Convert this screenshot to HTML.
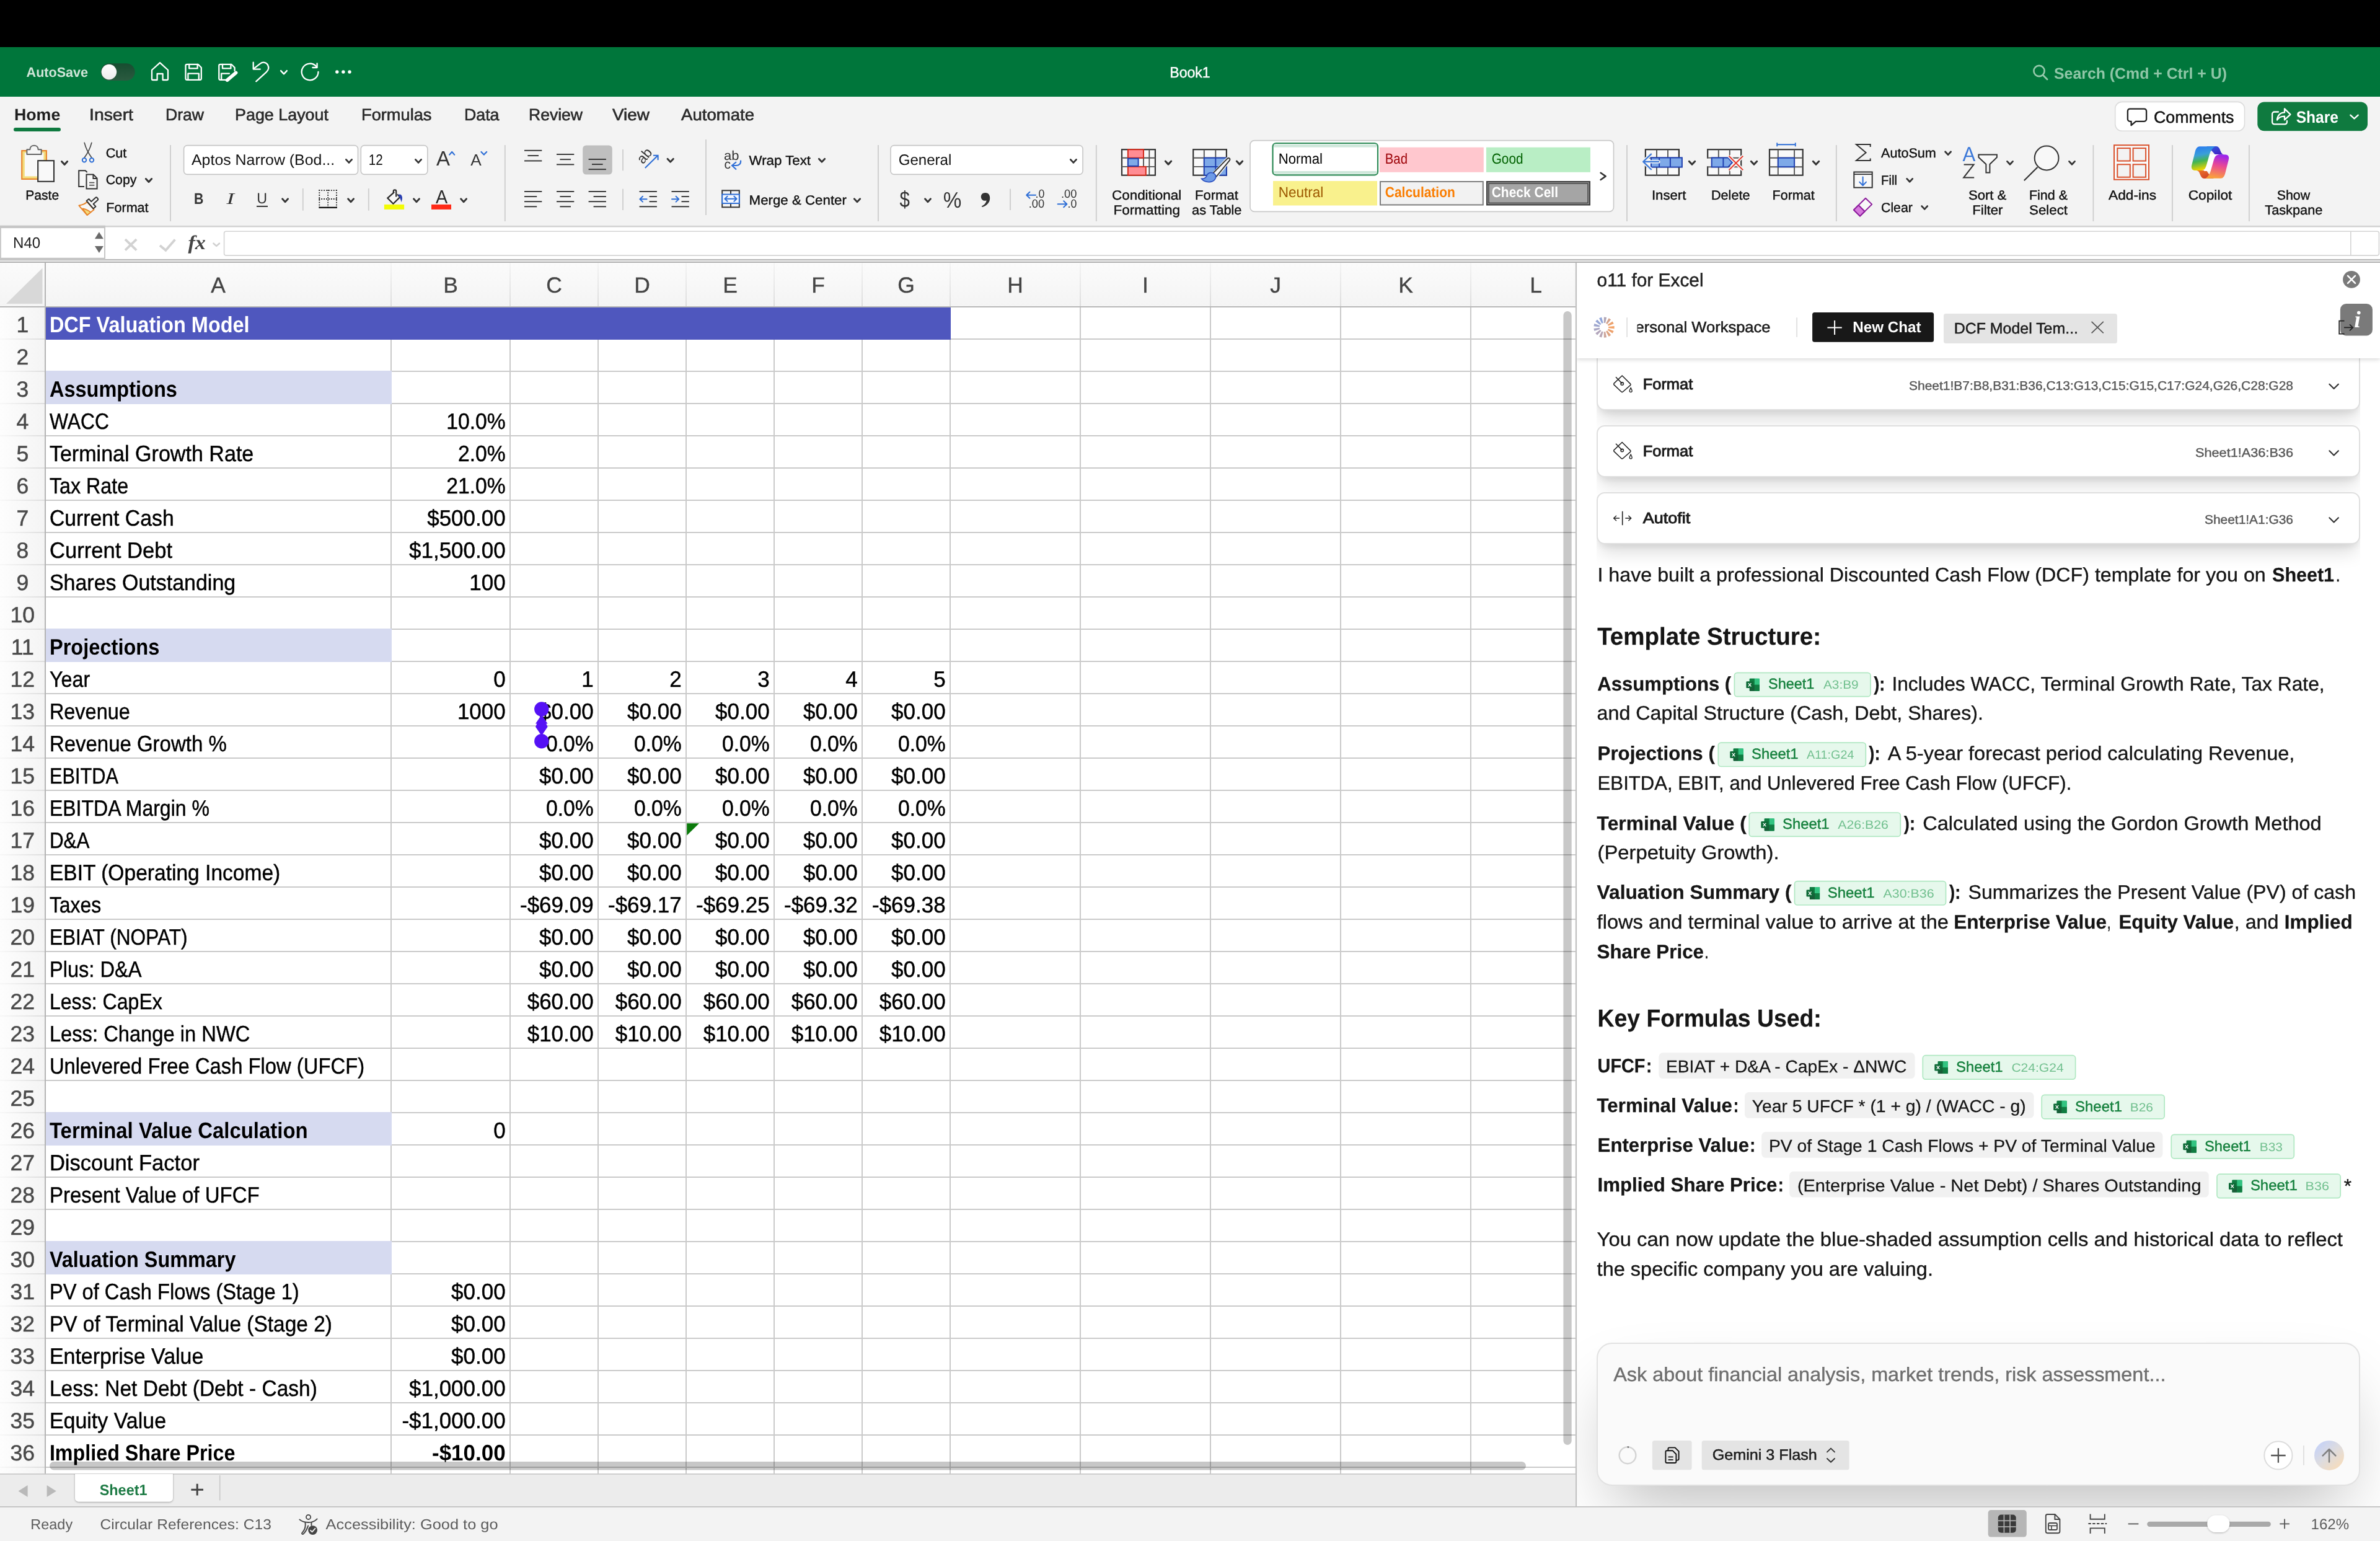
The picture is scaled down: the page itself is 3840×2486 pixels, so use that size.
<!DOCTYPE html>
<html lang="en"><head><meta charset="utf-8"><title>Book1 - Excel</title>
<style>
html,body{margin:0;padding:0;background:#fff;}
body{width:100vw;height:64.7396vw;position:relative;overflow:hidden;font-family:'Liberation Sans', sans-serif;}
svg{position:absolute;left:0;top:0;width:100vw;height:64.7396vw;will-change:transform;}
text{white-space:pre;}
</style></head><body>
<div style="position:absolute;left:66.25vw;top:11.0417vw;width:33.75vw;height:52.2656vw;overflow:hidden;background:#fff;"><div style="position:absolute;left:0.8333vw;top:4.0104vw;width:32.0833vw;height:40.625vw;overflow:hidden;"><div style="position:absolute;left:0;top:-0.9896vw;width:31.9792vw;height:3.0729vw;background:#fff;border:0.0521vw solid #dfdfdf;border-radius:0.3385vw;box-shadow:0 0.5208vw 0.7292vw -0.1562vw rgba(0,0,0,0.13), 0 0.2083vw 0.3125vw -0.1562vw rgba(0,0,0,0.09);"></div><div style="position:absolute;left:0;top:2.8125vw;width:31.9792vw;height:2.0833vw;background:#fff;border:0.0521vw solid #dfdfdf;border-radius:0.3385vw;box-shadow:0 0.5208vw 0.7292vw -0.1562vw rgba(0,0,0,0.13), 0 0.2083vw 0.3125vw -0.1562vw rgba(0,0,0,0.09);"></div><div style="position:absolute;left:0;top:5.625vw;width:31.9792vw;height:2.0833vw;background:#fff;border:0.0521vw solid #dfdfdf;border-radius:0.3385vw;box-shadow:0 0.5208vw 0.7292vw -0.1562vw rgba(0,0,0,0.13), 0 0.2083vw 0.3125vw -0.1562vw rgba(0,0,0,0.09);"></div></div><div style="position:absolute;left:0.8333vw;top:45.3646vw;width:31.9792vw;height:5.9115vw;background:#fafafa;border:0.0521vw solid #e2e2e2;border-radius:0.651vw;box-shadow:0 1.4323vw 2.8646vw -0.6771vw rgba(0,0,0,0.26);"></div><div style="position:absolute;left:0;top:0;width:33.75vw;height:4.0104vw;background:#fff;box-shadow:0 0.0521vw 0.1823vw rgba(0,0,0,0.16);"></div></div>
<svg viewBox="0 0 3840 2486" preserveAspectRatio="xMinYMin meet" text-rendering="geometricPrecision">
<rect x="0" y="0" width="3840" height="76" fill="#000" />
<rect x="0" y="76" width="3840" height="80" fill="#00763B" />
<rect x="0" y="156" width="3840" height="208" fill="#f3f3f3" />
<rect x="0" y="364" width="3840" height="60" fill="#fff" />
<rect x="0" y="364" width="3840" height="2.5" fill="#d2d2d2" />
<rect x="0" y="418" width="3840" height="1.6" fill="#ababab" />
<rect x="0" y="419.6" width="3840" height="2.9" fill="#dedede" />
<rect x="0" y="422.5" width="3840" height="1.5" fill="#a8a8a8" />
<text x="42.6" y="123.7" font-family="'Liberation Sans', sans-serif" font-size="22" fill="#cfe5d8" font-weight="700" textLength="99.5" lengthAdjust="spacingAndGlyphs" >AutoSave</text>
<defs><linearGradient id="tg" x1="0" y1="0" x2="0" y2="1"><stop offset="0" stop-color="#174d30"/><stop offset="1" stop-color="#2b5a40"/></linearGradient><linearGradient id="knob" x1="0" y1="0" x2="0" y2="1"><stop offset="0" stop-color="#ffffff"/><stop offset="1" stop-color="#ececec"/></linearGradient></defs>
<rect x="162.5" y="102.2" width="55.2" height="27.8" fill="url(#tg)" rx="13.9" />
<circle cx="175.9" cy="116.1" r="12.3" fill="url(#knob)" />
<path d="M245 113 L258 101.2 L271 113 V127.4 a1.6 1.6 0 0 1 -1.6 1.6 H262.6 V119 H253.6 V129 H246.6 a1.6 1.6 0 0 1 -1.6 -1.6 Z" fill="none" stroke="#fff" stroke-width="2.3" stroke-linejoin="round" stroke-linecap="round"/>
<path d="M301.5 103.8 H319.5 L324.8 109 V126.5 a2.4 2.4 0 0 1 -2.4 2.4 H301.9 a2.4 2.4 0 0 1 -2.4 -2.4 V105.8 a2 2 0 0 1 2 -2 Z" fill="none" stroke="#fff" stroke-width="2.3" stroke-linejoin="round" stroke-linecap="round"/>
<path d="M305.2 104 V110.4 H318.6 V104" fill="none" stroke="#fff" stroke-width="2.3" stroke-linejoin="round" stroke-linecap="round"/>
<path d="M303.4 128.8 V118.6 H320.8 V128.8" fill="none" stroke="#fff" stroke-width="2.3" stroke-linejoin="round" stroke-linecap="round"/>
<path d="M366 128.9 H355.7 a2.4 2.4 0 0 1 -2.4 -2.4 V105.8 a2 2 0 0 1 2 -2 H373.3 L378.6 109 V114" fill="none" stroke="#fff" stroke-width="2.3" stroke-linejoin="round" stroke-linecap="round"/>
<path d="M359 104 V110.4 H372.4 V104" fill="none" stroke="#fff" stroke-width="2.3" stroke-linejoin="round" stroke-linecap="round"/>
<path d="M357.2 128.8 V118.6 H370" fill="none" stroke="#fff" stroke-width="2.3" stroke-linejoin="round" stroke-linecap="round"/>
<path d="M366.5 129.3 L380.6 117.4" fill="none" stroke="#fff" stroke-width="5.6" stroke-linecap="round"/>
<path d="M408.7 100.6 V111.6 H419.8" fill="none" stroke="#fff" stroke-width="2.3" stroke-linejoin="round" stroke-linecap="round"/>
<path d="M409.6 110.6 L419.5 102.8 C424 99.4 429.6 100.2 432 104.6 C434.2 108.8 433 113.4 429.4 116.6 L413.2 131.3" fill="none" stroke="#fff" stroke-width="2.3" stroke-linejoin="round" stroke-linecap="round"/>
<polyline points="453.12,114.07000000000001 458,119.33 462.88,114.07000000000001" fill="none" stroke="#fff" stroke-width="2.4" stroke-linecap="round" stroke-linejoin="round"/>
<path d="M510.6 107.6 A13.4 13.4 0 1 0 513.5 116" fill="none" stroke="#fff" stroke-width="2.3" stroke-linejoin="round" stroke-linecap="round"/>
<path d="M511.6 102.4 V109 H504.4" fill="none" stroke="#fff" stroke-width="2.3" stroke-linejoin="round" stroke-linecap="round"/>
<circle cx="543.8" cy="116" r="2.7" fill="#fff" />
<circle cx="553.9" cy="116" r="2.7" fill="#fff" />
<circle cx="564" cy="116" r="2.7" fill="#fff" />
<text x="1887.3" y="124.7" font-family="'Liberation Sans', sans-serif" font-size="24.4" fill="#fff" textLength="65.4" lengthAdjust="spacingAndGlyphs" stroke="#fff" stroke-width="0.45">Book1</text>
<circle cx="3290" cy="114.5" r="8.6" fill="none" stroke="#97caad" stroke-width="2.6" />
<line x1="3296.5" y1="121.5" x2="3303" y2="128" stroke="#97caad" stroke-width="2.8" stroke-linecap="round"/>
<text x="3314" y="127" font-family="'Liberation Sans', sans-serif" font-size="25" fill="#8fc6a7" font-weight="700" textLength="279" lengthAdjust="spacingAndGlyphs" >Search (Cmd + Ctrl + U)</text>
<text x="22.9" y="194" font-family="'Liberation Sans', sans-serif" font-size="26.5" fill="#1f1f1f" font-weight="700" textLength="74.4" lengthAdjust="spacingAndGlyphs" >Home</text>
<text x="144" y="194" font-family="'Liberation Sans', sans-serif" font-size="26.5" fill="#2b2b2b" textLength="71" lengthAdjust="spacingAndGlyphs" stroke="#2b2b2b" stroke-width="0.65">Insert</text>
<text x="267" y="194" font-family="'Liberation Sans', sans-serif" font-size="26.5" fill="#2b2b2b" textLength="62" lengthAdjust="spacingAndGlyphs" stroke="#2b2b2b" stroke-width="0.65">Draw</text>
<text x="379" y="194" font-family="'Liberation Sans', sans-serif" font-size="26.5" fill="#2b2b2b" textLength="151" lengthAdjust="spacingAndGlyphs" stroke="#2b2b2b" stroke-width="0.65">Page Layout</text>
<text x="583" y="194" font-family="'Liberation Sans', sans-serif" font-size="26.5" fill="#2b2b2b" textLength="113.5" lengthAdjust="spacingAndGlyphs" stroke="#2b2b2b" stroke-width="0.65">Formulas</text>
<text x="749" y="194" font-family="'Liberation Sans', sans-serif" font-size="26.5" fill="#2b2b2b" textLength="56.5" lengthAdjust="spacingAndGlyphs" stroke="#2b2b2b" stroke-width="0.65">Data</text>
<text x="853" y="194" font-family="'Liberation Sans', sans-serif" font-size="26.5" fill="#2b2b2b" textLength="87" lengthAdjust="spacingAndGlyphs" stroke="#2b2b2b" stroke-width="0.65">Review</text>
<text x="988" y="194" font-family="'Liberation Sans', sans-serif" font-size="26.5" fill="#2b2b2b" textLength="60" lengthAdjust="spacingAndGlyphs" stroke="#2b2b2b" stroke-width="0.65">View</text>
<text x="1099" y="194" font-family="'Liberation Sans', sans-serif" font-size="26.5" fill="#2b2b2b" textLength="118" lengthAdjust="spacingAndGlyphs" stroke="#2b2b2b" stroke-width="0.65">Automate</text>
<rect x="22" y="206" width="76" height="6" fill="#0f7a40" rx="3" />
<rect x="3412.7" y="164.4" width="208.8" height="46.9" fill="#fff" rx="11" stroke="#dcdcdc" stroke-width="1.6" />
<path d="M3436.5 175.6 H3459.5 a3.6 3.6 0 0 1 3.6 3.6 V192.2 a3.6 3.6 0 0 1 -3.6 3.6 H3446 L3438.6 202.2 V195.8 H3436.5 a3.6 3.6 0 0 1 -3.6 -3.6 V179.2 a3.6 3.6 0 0 1 3.6 -3.6 Z" fill="none" stroke="#222" stroke-width="2.3" stroke-linejoin="round"/>
<text x="3475" y="198.4" font-family="'Liberation Sans', sans-serif" font-size="26.5" fill="#111" textLength="129.5" lengthAdjust="spacingAndGlyphs" stroke="#111" stroke-width="0.5">Comments</text>
<rect x="3642.3" y="164.4" width="177.7" height="46.9" fill="#0f7a3f" rx="11" />
<path d="M3676 180.5 H3669.5 a3.4 3.4 0 0 0 -3.4 3.4 V197 a3.4 3.4 0 0 0 3.4 3.4 H3686.5 a3.4 3.4 0 0 0 3.4 -3.4 V195" fill="none" stroke="#fff" stroke-width="2.3" stroke-linecap="round" stroke-linejoin="round"/>
<path d="M3674 193.5 C3674.6 186.2 3679 181.6 3686 181.4 V175.4 L3695.4 184.6 L3686 193.4 V187.6 C3680.6 187.4 3676.8 189.4 3674 193.5 Z" fill="none" stroke="#fff" stroke-width="2.3" stroke-linejoin="round"/>
<text x="3704.7" y="198.4" font-family="'Liberation Sans', sans-serif" font-size="26.5" fill="#fff" font-weight="700" textLength="68.3" lengthAdjust="spacingAndGlyphs" >Share</text>
<polyline points="3792.27,185.72 3798.5,191.28 3804.73,185.72" fill="none" stroke="#fff" stroke-width="2.4" stroke-linecap="round" stroke-linejoin="round"/>
<rect x="35.2" y="243.1" width="39.7" height="45.8" fill="#f3dc7c" stroke="#e8852b" stroke-width="2.1" />
<rect x="39.8" y="246.4" width="30.6" height="38" fill="#f9f9f9" />
<path d="M43.4 249 V241.2 H48.4 C48.4 232.6 61.6 232.6 61.6 241.2 H66.7 V249 Z" fill="#f6f6f6" stroke="#666" stroke-width="2" stroke-linejoin="round"/>
<rect x="61.2" y="259.2" width="25.8" height="33.6" fill="#f9f9f9" stroke="#333" stroke-width="2.1" />
<polyline points="99.57499999999999,260.475 104.1,265.525 108.625,260.475" fill="none" stroke="#333" stroke-width="3" stroke-linecap="round" stroke-linejoin="round"/>
<text x="41.3" y="321.8" font-family="'Liberation Sans', sans-serif" font-size="21.3" fill="#111" textLength="53.9" lengthAdjust="spacingAndGlyphs" stroke="#111" stroke-width="0.4">Paste</text>
<path d="M136.2 230.4 C138.2 238 142.8 247.6 148 254.6" fill="none" stroke="#444" stroke-width="1.7" stroke-linecap="round"/>
<path d="M147.8 230.4 C145.8 238 141.2 247.6 136 254.6" fill="none" stroke="#444" stroke-width="1.7" stroke-linecap="round"/>
<circle cx="136" cy="258.3" r="3.2" fill="none" stroke="#2f6fd6" stroke-width="2" />
<circle cx="148" cy="258.3" r="3.2" fill="none" stroke="#2f6fd6" stroke-width="2" />
<text x="170.7" y="254" font-family="'Liberation Sans', sans-serif" font-size="21.3" fill="#111" textLength="33.7" lengthAdjust="spacingAndGlyphs" stroke="#111" stroke-width="0.4">Cut</text>
<path d="M136 301 H127.2 V275.2 H137.8 L140.6 278" fill="#f8f8f8" stroke="#333" stroke-width="2" stroke-linejoin="miter"/>
<path d="M139.5 281.6 H150.6 L156.6 287.6 V304.4 H139.5 Z" fill="#f8f8f8" stroke="#333" stroke-width="2" />
<path d="M150.4 281.8 V288 H156.4" fill="none" stroke="#333" stroke-width="2" />
<line x1="144" y1="294.6" x2="152.4" y2="294.6" stroke="#555" stroke-width="1.8" />
<line x1="144" y1="298.8" x2="152.4" y2="298.8" stroke="#555" stroke-width="1.8" />
<text x="170.7" y="297.3" font-family="'Liberation Sans', sans-serif" font-size="21.3" fill="#111" textLength="49.8" lengthAdjust="spacingAndGlyphs" stroke="#111" stroke-width="0.4">Copy</text>
<polyline points="235.375,288.475 240,293.525 244.625,288.475" fill="none" stroke="#333" stroke-width="3" stroke-linecap="round" stroke-linejoin="round"/>
<path d="M127.4 331.6 C133 330.6 137.6 328.6 140.6 325.8 L151.6 338.2 L140.6 347 Z" fill="#f7f7f7" stroke="#e8852b" stroke-width="2" stroke-linejoin="round"/>
<path d="M133.4 336.4 C138.4 337.6 143.2 339.8 146.4 342.4 L140.6 347 Z" fill="#f3dc7c" stroke="#e8852b" stroke-width="1.6" stroke-linejoin="round"/>
<path d="M139.6 324 L143.4 321 L147.2 325.2 L154 319 a2 2 0 0 1 2.8 0.2 L157.6 320.2 a2 2 0 0 1 -0.2 2.8 L150.6 329 L154.4 333.2 L150.6 336.6 Z" fill="#f7f7f7" stroke="#333" stroke-width="2" stroke-linejoin="round"/>
<text x="171.3" y="341.5" font-family="'Liberation Sans', sans-serif" font-size="21.3" fill="#111" textLength="68.3" lengthAdjust="spacingAndGlyphs" stroke="#111" stroke-width="0.4">Format</text>
<rect x="274.1" y="234" width="1.8" height="123" fill="#cdcdcd" />
<rect x="296.6" y="234.6" width="280.9" height="46.8" fill="#fff" rx="5.5" stroke="#c6c6c6" stroke-width="1.6" />
<text x="309" y="265.9" font-family="'Liberation Sans', sans-serif" font-size="24.2" fill="#111" textLength="231.2" lengthAdjust="spacingAndGlyphs" >Aptos Narrow (Bod...</text>
<polyline points="558.39,257.39 563,262.40999999999997 567.61,257.39" fill="none" stroke="#333" stroke-width="2.8" stroke-linecap="round" stroke-linejoin="round"/>
<rect x="582.3" y="234.6" width="107.5" height="46.8" fill="#fff" rx="5.5" stroke="#c6c6c6" stroke-width="1.6" />
<text x="594.8" y="265.9" font-family="'Liberation Sans', sans-serif" font-size="24.2" fill="#111" textLength="23" lengthAdjust="spacingAndGlyphs" >12</text>
<polyline points="670.39,257.39 675,262.40999999999997 679.61,257.39" fill="none" stroke="#333" stroke-width="2.8" stroke-linecap="round" stroke-linejoin="round"/>
<text x="704" y="267" font-family="'Liberation Sans', sans-serif" font-size="33.5" fill="#333" textLength="22" lengthAdjust="spacingAndGlyphs" >A</text>
<path d="M725.2 249.6 L729.2 245 L733.2 249.6" fill="none" stroke="#2f6fd6" stroke-width="2.2" stroke-linejoin="round" stroke-linecap="round"/>
<text x="759.3" y="267" font-family="'Liberation Sans', sans-serif" font-size="26" fill="#333" textLength="17.5" lengthAdjust="spacingAndGlyphs" >A</text>
<path d="M776.4 245 L780.8 249.6 L785.2 245" fill="none" stroke="#2f6fd6" stroke-width="2.2" stroke-linejoin="round" stroke-linecap="round"/>
<text x="313" y="328.6" font-family="'Liberation Sans', sans-serif" font-size="25" fill="#333" font-weight="700" textLength="15.4" lengthAdjust="spacingAndGlyphs" >B</text>
<text x="365.6" y="328.6" font-family="'Liberation Serif', serif" font-size="26" fill="#333" font-style="italic" textLength="12.5" lengthAdjust="spacingAndGlyphs" >I</text>
<text x="414.3" y="327.6" font-family="'Liberation Sans', sans-serif" font-size="24" fill="#333" textLength="16.8" lengthAdjust="spacingAndGlyphs" >U</text>
<rect x="414" y="331.9" width="18" height="2" fill="#333" />
<polyline points="455.59000000000003,320.69 460.1,325.71 464.61,320.69" fill="none" stroke="#333" stroke-width="2.8" stroke-linecap="round" stroke-linejoin="round"/>
<rect x="487.90000000000003" y="304" width="1.8" height="35.69999999999999" fill="#cdcdcd" />
<g stroke="#222" stroke-width="1.8" stroke-dasharray="1.8 2.1"><line x1="514.4" y1="307.2" x2="543.9" y2="307.2"/><line x1="515.3" y1="306.3" x2="515.3" y2="334"/><line x1="543" y1="306.3" x2="543" y2="334"/><line x1="529.2" y1="306.3" x2="529.2" y2="334"/><line x1="514.4" y1="321" x2="543.9" y2="321"/></g>
<rect x="514.4" y="333.7" width="29.5" height="2.3" fill="#111" />
<polyline points="561.59,320.69 566.1,325.71 570.61,320.69" fill="none" stroke="#333" stroke-width="2.8" stroke-linecap="round" stroke-linejoin="round"/>
<rect x="593.9" y="304" width="1.8" height="35.69999999999999" fill="#cdcdcd" />
<path d="M636.2 309.9 L625.3 319.6 L634.4 328.7 L645.4 317.9 L641 313.4" fill="#f8f8f8" stroke="#2b2b2b" stroke-width="2.2" stroke-linejoin="miter"/>
<path d="M634.8 311 V308.6 a2.2 2.2 0 0 1 4.4 0 V317.4" fill="none" stroke="#2b2b2b" stroke-width="2.2" stroke-linecap="butt"/>
<path d="M642.4 314.4 C645.2 312.4 648.7 314.4 649 318.6 C649.2 321.6 648.3 324 647.5 326.3 C647 322.6 645.6 319.4 642.4 314.4 Z" fill="#2a3fb0" />
<rect x="619.9" y="329.9" width="32.2" height="8" fill="#f2fb05" />
<polyline points="667.49,320.69 672,325.71 676.51,320.69" fill="none" stroke="#333" stroke-width="2.8" stroke-linecap="round" stroke-linejoin="round"/>
<text x="702.9" y="327.8" font-family="'Liberation Sans', sans-serif" font-size="30.4" fill="#2b2b2b" textLength="19.2" lengthAdjust="spacingAndGlyphs" >A</text>
<rect x="696" y="329.9" width="32" height="8" fill="#ff2a17" />
<polyline points="743.59,320.69 748.1,325.71 752.61,320.69" fill="none" stroke="#333" stroke-width="2.8" stroke-linecap="round" stroke-linejoin="round"/>
<rect x="813.9" y="234" width="1.8" height="123" fill="#cdcdcd" />
<rect x="940.2" y="234.4" width="47.6" height="47.2" fill="#bfbfbf" rx="5.5" />
<rect x="846" y="241.85000000000002" width="28.3" height="1.9" fill="#333" />
<rect x="851.4" y="250.15" width="17.6" height="1.9" fill="#333" />
<rect x="846" y="258.55" width="28.3" height="1.9" fill="#333" />
<rect x="898" y="248.05" width="28.3" height="1.9" fill="#333" />
<rect x="903.4" y="256.25" width="17.6" height="1.9" fill="#333" />
<rect x="898" y="264.45" width="28.3" height="1.9" fill="#333" />
<rect x="949.6" y="256.05" width="28.3" height="1.9" fill="#333" />
<rect x="955.0" y="264.15000000000003" width="17.6" height="1.9" fill="#333" />
<rect x="949.6" y="272.25" width="28.3" height="1.9" fill="#333" />
<rect x="1004.1" y="241" width="1.8" height="34.30000000000001" fill="#cdcdcd" />
<text x="0" y="0" font-family="'Liberation Sans', sans-serif" font-size="22.4" fill="#333" transform="translate(1037.6,265.6) rotate(-50)">ab</text>
<path d="M1040.8 271 L1061.2 251 M1054 250.7 H1061.6 V258.2" fill="none" stroke="#2f6fd6" stroke-width="2.1" stroke-linecap="butt" stroke-linejoin="miter"/>
<polyline points="1076.99,256.19 1081.7,261.21 1086.41,256.19" fill="none" stroke="#333" stroke-width="2.8" stroke-linecap="round" stroke-linejoin="round"/>
<rect x="846" y="308.05" width="28.3" height="1.9" fill="#333" />
<rect x="846" y="316.15000000000003" width="20.2" height="1.9" fill="#333" />
<rect x="846" y="324.25" width="28.3" height="1.9" fill="#333" />
<rect x="846" y="332.35" width="20.2" height="1.9" fill="#333" />
<rect x="898" y="308.05" width="28.3" height="1.9" fill="#333" />
<rect x="903.4" y="316.15000000000003" width="17.6" height="1.9" fill="#333" />
<rect x="898" y="324.25" width="28.3" height="1.9" fill="#333" />
<rect x="903.4" y="332.35" width="17.6" height="1.9" fill="#333" />
<rect x="949.6" y="308.05" width="28.3" height="1.9" fill="#333" />
<rect x="957.6" y="316.15000000000003" width="20.3" height="1.9" fill="#333" />
<rect x="949.6" y="324.25" width="28.3" height="1.9" fill="#333" />
<rect x="957.6" y="332.35" width="20.3" height="1.9" fill="#333" />
<rect x="1004.1" y="304.7" width="1.8" height="34.30000000000001" fill="#cdcdcd" />
<rect x="1031.6" y="308.05" width="28.3" height="1.9" fill="#333" />
<rect x="1047.6" y="316.15000000000003" width="12.3" height="1.9" fill="#333" />
<rect x="1047.6" y="324.25" width="12.3" height="1.9" fill="#333" />
<rect x="1031.6" y="332.35" width="28.3" height="1.9" fill="#333" />
<path d="M1043.6 321.2 H1032.6 M1037 316.8 L1032.4 321.2 L1037 325.6" fill="none" stroke="#2f6fd6" stroke-width="2" stroke-linejoin="round" stroke-linecap="round"/>
<rect x="1083.5" y="308.05" width="28.3" height="1.9" fill="#333" />
<rect x="1099.5" y="316.15000000000003" width="12.3" height="1.9" fill="#333" />
<rect x="1099.5" y="324.25" width="12.3" height="1.9" fill="#333" />
<rect x="1083.5" y="332.35" width="28.3" height="1.9" fill="#333" />
<path d="M1084 321.2 H1095 M1090.6 316.8 L1095.2 321.2 L1090.6 325.6" fill="none" stroke="#2f6fd6" stroke-width="2" stroke-linejoin="round" stroke-linecap="round"/>
<rect x="1138.1" y="225" width="1.8" height="122" fill="#cdcdcd" />
<text x="1168" y="257.6" font-family="'Liberation Sans', sans-serif" font-size="21" fill="#333" textLength="24.5" lengthAdjust="spacingAndGlyphs" >ab</text>
<text x="1168.4" y="271.8" font-family="'Liberation Sans', sans-serif" font-size="21" fill="#333" >c</text>
<path d="M1195 258.6 C1195.8 264 1192.8 267 1187.4 267 H1181.6 M1188 261.2 L1181 267 L1188 273.4" fill="none" stroke="#2f6fd6" stroke-width="2.1" stroke-linecap="butt" stroke-linejoin="miter"/>
<text x="1208.6" y="266" font-family="'Liberation Sans', sans-serif" font-size="21.3" fill="#111" textLength="99.4" lengthAdjust="spacingAndGlyphs" stroke="#111" stroke-width="0.4">Wrap Text</text>
<polyline points="1321.29,256.19 1326,261.21 1330.71,256.19" fill="none" stroke="#333" stroke-width="2.8" stroke-linecap="round" stroke-linejoin="round"/>
<rect x="1165.2" y="307.3" width="27.6" height="27" fill="none" stroke="#333" stroke-width="2" />
<line x1="1179" y1="307.3" x2="1179" y2="313.6" stroke="#333" stroke-width="2" />
<line x1="1179" y1="328" x2="1179" y2="334.3" stroke="#333" stroke-width="2" />
<rect x="1165.2" y="313.6" width="27.6" height="14.4" fill="#f4f8ff" stroke="#2f6fd6" stroke-width="2" />
<path d="M1169.6 320.8 H1188.4 M1173.6 316.8 L1169.4 320.8 L1173.6 324.8 M1184.4 316.8 L1188.6 320.8 L1184.4 324.8" fill="none" stroke="#2f6fd6" stroke-width="2" stroke-linejoin="round" stroke-linecap="round"/>
<text x="1208.6" y="329.7" font-family="'Liberation Sans', sans-serif" font-size="21.3" fill="#111" textLength="157.3" lengthAdjust="spacingAndGlyphs" stroke="#111" stroke-width="0.4">Merge &amp; Center</text>
<polyline points="1378.29,320.69 1383,325.71 1387.71,320.69" fill="none" stroke="#333" stroke-width="2.8" stroke-linecap="round" stroke-linejoin="round"/>
<rect x="1416.1" y="234" width="1.8" height="123" fill="#cdcdcd" />
<rect x="1437" y="234.6" width="310" height="46.8" fill="#fff" rx="5.5" stroke="#c6c6c6" stroke-width="1.6" />
<text x="1449.8" y="265.9" font-family="'Liberation Sans', sans-serif" font-size="24.2" fill="#111" textLength="85.5" lengthAdjust="spacingAndGlyphs" >General</text>
<polyline points="1727.2900000000002,257.39 1731.9,262.40999999999997 1736.51,257.39" fill="none" stroke="#333" stroke-width="2.8" stroke-linecap="round" stroke-linejoin="round"/>
<text x="1451.6" y="334.2" font-family="'Liberation Sans', sans-serif" font-size="36.4" fill="#333" textLength="16.4" lengthAdjust="spacingAndGlyphs" >$</text>
<polyline points="1492.49,320.69 1497,325.71 1501.51,320.69" fill="none" stroke="#333" stroke-width="2.8" stroke-linecap="round" stroke-linejoin="round"/>
<text x="1521.8" y="335.4" font-family="'Liberation Sans', sans-serif" font-size="36" fill="#333" textLength="29.6" lengthAdjust="spacingAndGlyphs" >%</text>
<path d="M1589.6 311 C1594.6 311 1597.2 314.4 1597.2 319.4 C1597.2 326.4 1592.6 331.8 1584.6 334 L1583.8 332.4 C1588.6 330.4 1591.2 327 1591.6 323.2 C1591 323.6 1590.2 323.8 1589.2 323.8 C1585.4 323.8 1582.8 321 1582.8 317.4 C1582.8 313.8 1585.6 311 1589.6 311 Z" fill="#333" />
<rect x="1629.1" y="304.7" width="1.8" height="34.30000000000001" fill="#cdcdcd" />
<text x="1670.6" y="319" font-family="'Liberation Sans', sans-serif" font-size="19" fill="#333" textLength="14.8" lengthAdjust="spacingAndGlyphs" >.0</text>
<text x="1659.8" y="335.4" font-family="'Liberation Sans', sans-serif" font-size="19" fill="#333" textLength="25.4" lengthAdjust="spacingAndGlyphs" >.00</text>
<path d="M1671 314.8 H1656.6 M1661.4 309.8 L1656.2 314.8 L1661.4 319.8" fill="none" stroke="#2f6fd6" stroke-width="2" stroke-linejoin="round" stroke-linecap="round"/>
<text x="1712" y="319" font-family="'Liberation Sans', sans-serif" font-size="19" fill="#333" textLength="25.4" lengthAdjust="spacingAndGlyphs" >.00</text>
<text x="1722.6" y="335.4" font-family="'Liberation Sans', sans-serif" font-size="19" fill="#333" textLength="14.8" lengthAdjust="spacingAndGlyphs" >.0</text>
<path d="M1706.6 329.2 H1721 M1716.2 324.2 L1721.4 329.2 L1716.2 334.2" fill="none" stroke="#2f6fd6" stroke-width="2" stroke-linejoin="round" stroke-linecap="round"/>
<rect x="1767.8999999999999" y="234" width="1.8" height="123" fill="#cdcdcd" />
<rect x="1810" y="241.2" width="53.90000000000009" height="41.5" fill="#f9f9f9" stroke="#333" stroke-width="2.2" />
<line x1="1819.9" y1="241.2" x2="1819.9" y2="282.7" stroke="#555" stroke-width="1.9" />
<line x1="1845" y1="241.2" x2="1845" y2="282.7" stroke="#555" stroke-width="1.9" />
<line x1="1854.3" y1="241.2" x2="1854.3" y2="282.7" stroke="#555" stroke-width="1.9" />
<line x1="1810" y1="254.7" x2="1863.9" y2="254.7" stroke="#555" stroke-width="1.9" />
<line x1="1810" y1="268.9" x2="1863.9" y2="268.9" stroke="#555" stroke-width="1.9" />
<rect x="1819.9" y="241.2" width="25.1" height="13.5" fill="#ff8c93" stroke="#d22b1b" stroke-width="2" />
<rect x="1819.9" y="268.9" width="28.9" height="13.8" fill="#ff8c93" stroke="#d22b1b" stroke-width="2" />
<rect x="1819.9" y="255.7" width="16.7" height="12.2" fill="#7ea9e8" stroke="#2040b0" stroke-width="2" />
<polyline points="1880.275,260.07500000000005 1885,265.125 1889.725,260.07500000000005" fill="none" stroke="#333" stroke-width="3" stroke-linecap="round" stroke-linejoin="round"/>
<text x="1794" y="321.6" font-family="'Liberation Sans', sans-serif" font-size="21.3" fill="#111" textLength="112.2" lengthAdjust="spacingAndGlyphs" stroke="#111" stroke-width="0.4">Conditional</text>
<text x="1796.4" y="345.6" font-family="'Liberation Sans', sans-serif" font-size="21.3" fill="#111" textLength="107.6" lengthAdjust="spacingAndGlyphs" stroke="#111" stroke-width="0.4">Formatting</text>
<rect x="1925.2" y="241.2" width="53.700000000000045" height="41.5" fill="#f9f9f9" stroke="#333" stroke-width="2.2" />
<line x1="1942.8" y1="241.2" x2="1942.8" y2="282.7" stroke="#555" stroke-width="1.9" />
<line x1="1961.3" y1="241.2" x2="1961.3" y2="282.7" stroke="#555" stroke-width="1.9" />
<line x1="1925.2" y1="254.7" x2="1978.9" y2="254.7" stroke="#555" stroke-width="1.9" />
<line x1="1925.2" y1="268.9" x2="1978.9" y2="268.9" stroke="#555" stroke-width="1.9" />
<rect x="1942.8" y="254.7" width="36.1" height="28" fill="#7ea9e8" stroke="#2040b0" stroke-width="2" />
<line x1="1961.3" y1="254.7" x2="1961.3" y2="282.7" stroke="#2040b0" stroke-width="2" />
<line x1="1942.8" y1="268.9" x2="1978.9" y2="268.9" stroke="#2040b0" stroke-width="2" />
<path d="M1958 280.4 L1980 256.6 C1982.6 254 1985.2 255.6 1983.6 258.6 L1962.6 284.8 Z" fill="#f7f7f7" stroke="#f3f3f3" stroke-width="5" />
<path d="M1957 279.6 L1980 256.2 C1982.8 253.6 1985.6 255.8 1983.8 258.8 L1962.4 285 Z" fill="#f7f7f7" stroke="#333" stroke-width="1.9" stroke-linejoin="round"/>
<path d="M1938.6 288.4 C1945 288.6 1946.6 285 1948 281.6 C1950 277.6 1957 277.4 1960.2 281 C1963.4 285 1961 290.6 1956.4 292.6 C1950.4 295 1942.6 293.4 1938.6 288.4 Z" fill="#6f9be6" stroke="#2a4fc0" stroke-width="1.6" />
<polyline points="1995.275,260.07500000000005 2000,265.125 2004.725,260.07500000000005" fill="none" stroke="#333" stroke-width="3" stroke-linecap="round" stroke-linejoin="round"/>
<text x="1928" y="321.6" font-family="'Liberation Sans', sans-serif" font-size="21.3" fill="#111" textLength="69.9" lengthAdjust="spacingAndGlyphs" stroke="#111" stroke-width="0.4">Format</text>
<text x="1923.1" y="345.6" font-family="'Liberation Sans', sans-serif" font-size="21.3" fill="#111" textLength="80.3" lengthAdjust="spacingAndGlyphs" stroke="#111" stroke-width="0.4">as Table</text>
<rect x="2017" y="226.6" width="586.5" height="114.8" fill="#fff" rx="7" stroke="#c9c9c9" stroke-width="1.6" />
<rect x="2053.5" y="231" width="169.5" height="51.4" fill="#fff" rx="5.5" stroke="#2e8b57" stroke-width="2.2" />
<rect x="2055.2" y="232.6" width="166.1" height="5" fill="#cfe7db" />
<rect x="2055.2" y="276" width="166.1" height="4.6" fill="#cfe7db" />
<text x="2062.7" y="263.8" font-family="'Liberation Sans', sans-serif" font-size="23.5" fill="#000" textLength="71.3" lengthAdjust="spacingAndGlyphs" >Normal</text>
<rect x="2226" y="237.7" width="167.8" height="40.1" fill="#ffc7ce" />
<text x="2234.8" y="263.8" font-family="'Liberation Sans', sans-serif" font-size="23.5" fill="#9c0006" textLength="36.2" lengthAdjust="spacingAndGlyphs" >Bad</text>
<rect x="2398" y="237.7" width="168" height="40.1" fill="#b9eec5" />
<text x="2406.7" y="263.8" font-family="'Liberation Sans', sans-serif" font-size="23.5" fill="#006100" textLength="50.8" lengthAdjust="spacingAndGlyphs" >Good</text>
<rect x="2054" y="292" width="168" height="39.5" fill="#f9f18d" />
<text x="2062.7" y="317.6" font-family="'Liberation Sans', sans-serif" font-size="23.5" fill="#9c5700" textLength="72.6" lengthAdjust="spacingAndGlyphs" >Neutral</text>
<rect x="2227" y="293" width="165.8" height="37.5" fill="#f2f2f2" stroke="#7f7f7f" stroke-width="2" />
<text x="2234.8" y="317.6" font-family="'Liberation Sans', sans-serif" font-size="23.5" fill="#fa7d00" font-weight="700" textLength="113" lengthAdjust="spacingAndGlyphs" >Calculation</text>
<rect x="2398" y="292" width="168" height="39.5" fill="#3f3f3f" />
<rect x="2400.2" y="294.2" width="163.6" height="35.1" fill="#a5a5a5" />
<rect x="2402" y="296" width="160" height="31.5" fill="none" stroke="#3f3f3f" stroke-width="1.4" />
<text x="2406.7" y="317.6" font-family="'Liberation Sans', sans-serif" font-size="23.5" fill="#fff" font-weight="700" textLength="107.3" lengthAdjust="spacingAndGlyphs" >Check Cell</text>
<path d="M2582.6 278.8 L2590.6 284.4 L2582.6 290" fill="none" stroke="#333" stroke-width="2.6" stroke-linejoin="round" stroke-linecap="round"/>
<rect x="2624.1" y="234" width="1.8" height="123" fill="#cdcdcd" />
<rect x="2654.9" y="241.2" width="54.0" height="41.5" fill="#f9f9f9" stroke="#333" stroke-width="2.2" />
<line x1="2673" y1="241.2" x2="2673" y2="282.7" stroke="#555" stroke-width="1.9" />
<line x1="2691" y1="241.2" x2="2691" y2="282.7" stroke="#555" stroke-width="1.9" />
<line x1="2654.9" y1="254.7" x2="2708.9" y2="254.7" stroke="#555" stroke-width="1.9" />
<line x1="2654.9" y1="269.2" x2="2708.9" y2="269.2" stroke="#555" stroke-width="1.9" />
<rect x="2664" y="254.4" width="49.9" height="15.2" fill="#7ea9e8" stroke="#2040b0" stroke-width="2" />
<line x1="2677.1" y1="254.4" x2="2677.1" y2="269.6" stroke="#2040b0" stroke-width="2" />
<line x1="2694.9" y1="254.4" x2="2694.9" y2="269.6" stroke="#2040b0" stroke-width="2" />
<path d="M2676 260.9 H2651.4 M2664 248.6 L2651.2 260.9 L2664 273.2" fill="none" stroke="#f3f3f3" stroke-width="5.4" stroke-linejoin="round" stroke-linecap="round"/>
<path d="M2676 260.9 H2651.4 M2664 248.6 L2651.2 260.9 L2664 273.2" fill="none" stroke="#3b78d8" stroke-width="2.2" stroke-linejoin="round" stroke-linecap="round"/>
<polyline points="2725.275,260.27500000000003 2730,265.325 2734.725,260.27500000000003" fill="none" stroke="#333" stroke-width="3" stroke-linecap="round" stroke-linejoin="round"/>
<text x="2664.9" y="321.9" font-family="'Liberation Sans', sans-serif" font-size="21.3" fill="#111" textLength="55.5" lengthAdjust="spacingAndGlyphs" stroke="#111" stroke-width="0.4">Insert</text>
<rect x="2755.2" y="241.2" width="54.0" height="41.5" fill="#f9f9f9" stroke="#333" stroke-width="2.2" />
<line x1="2772.8" y1="241.2" x2="2772.8" y2="282.7" stroke="#555" stroke-width="1.9" />
<line x1="2790.8" y1="241.2" x2="2790.8" y2="282.7" stroke="#555" stroke-width="1.9" />
<line x1="2755.2" y1="254.7" x2="2809.2" y2="254.7" stroke="#555" stroke-width="1.9" />
<line x1="2755.2" y1="269.2" x2="2809.2" y2="269.2" stroke="#555" stroke-width="1.9" />
<rect x="2752" y="255.7" width="12" height="12.5" fill="#f3f3f3" />
<path d="M2761.7 254.4 H2788 L2795 262.2 L2788 269.6 H2761.7 Z" fill="#7ea9e8" stroke="#2040b0" stroke-width="2" />
<line x1="2780.4" y1="254.4" x2="2780.4" y2="269.6" stroke="#2040b0" stroke-width="2" />
<path d="M2789.5 251.6 L2812.3 274.4 M2812.3 251.6 L2789.5 274.4" fill="none" stroke="#f3f3f3" stroke-width="5.4" />
<path d="M2789.5 251.6 L2812.3 274.4 M2812.3 251.6 L2789.5 274.4" fill="none" stroke="#e8392c" stroke-width="2" />
<polyline points="2825.275,260.27500000000003 2830,265.325 2834.725,260.27500000000003" fill="none" stroke="#333" stroke-width="3" stroke-linecap="round" stroke-linejoin="round"/>
<text x="2761" y="321.9" font-family="'Liberation Sans', sans-serif" font-size="21.3" fill="#111" textLength="62.4" lengthAdjust="spacingAndGlyphs" stroke="#111" stroke-width="0.4">Delete</text>
<rect x="2855" y="241.2" width="53.69999999999982" height="41.5" fill="#f9f9f9" stroke="#333" stroke-width="2.2" />
<line x1="2868.8" y1="241.2" x2="2868.8" y2="282.7" stroke="#555" stroke-width="1.9" />
<line x1="2895.1" y1="241.2" x2="2895.1" y2="282.7" stroke="#555" stroke-width="1.9" />
<line x1="2855" y1="254.7" x2="2908.7" y2="254.7" stroke="#555" stroke-width="1.9" />
<line x1="2855" y1="269.2" x2="2908.7" y2="269.2" stroke="#555" stroke-width="1.9" />
<rect x="2868.8" y="254.7" width="26.3" height="14.5" fill="#7ea9e8" stroke="#2040b0" stroke-width="2" />
<path d="M2867.2 230.2 V236.2 M2896.8 230.2 V236.2 M2867.2 233.2 H2896.8" fill="none" stroke="#2f6fd6" stroke-width="1.9" />
<polyline points="2925.275,260.27500000000003 2930,265.325 2934.725,260.27500000000003" fill="none" stroke="#333" stroke-width="3" stroke-linecap="round" stroke-linejoin="round"/>
<text x="2859.5" y="321.9" font-family="'Liberation Sans', sans-serif" font-size="21.3" fill="#111" textLength="68.3" lengthAdjust="spacingAndGlyphs" stroke="#111" stroke-width="0.4">Format</text>
<rect x="2961.9" y="234" width="1.8" height="123" fill="#cdcdcd" />
<path d="M3017.7 237 V233 H2995 L3010.6 246.2 L2995 259 H3017.7 V255.4" fill="none" stroke="#333" stroke-width="2" />
<text x="3035.1" y="253.6" font-family="'Liberation Sans', sans-serif" font-size="21.3" fill="#111" textLength="88.6" lengthAdjust="spacingAndGlyphs" stroke="#111" stroke-width="0.4">AutoSum</text>
<polyline points="3138.5899999999997,244.79 3143.1,249.60999999999999 3147.61,244.79" fill="none" stroke="#333" stroke-width="2.8" stroke-linecap="round" stroke-linejoin="round"/>
<rect x="2991.3" y="277.5" width="29.4" height="25.1" fill="#f8f8f8" stroke="#333" stroke-width="2" />
<line x1="2991.3" y1="281.2" x2="3020.7" y2="281.2" stroke="#333" stroke-width="1.8" />
<path d="M3005.6 285.4 V298.8 M3000.2 293.6 L3005.6 299.2 L3011 293.6" fill="none" stroke="#2f6fd6" stroke-width="2" stroke-linejoin="round" stroke-linecap="round"/>
<text x="3035.1" y="297.5" font-family="'Liberation Sans', sans-serif" font-size="21.3" fill="#111" textLength="25.9" lengthAdjust="spacingAndGlyphs" stroke="#111" stroke-width="0.4">Fill</text>
<polyline points="3076.6899999999996,288.39 3081.2,293.21000000000004 3085.71,288.39" fill="none" stroke="#333" stroke-width="2.8" stroke-linecap="round" stroke-linejoin="round"/>
<path d="M3010 319.8 L3020.2 329.6 L3001 348.6 L2990.9 338.6 Z" fill="#f8f8f8" stroke="#8b1a9b" stroke-width="2" stroke-linejoin="round"/>
<path d="M2998.6 331 L3008.6 341 L3001 348.6 L2990.9 338.6 Z" fill="#d679dc" stroke="#8b1a9b" stroke-width="2" stroke-linejoin="round"/>
<text x="3035.1" y="341.5" font-family="'Liberation Sans', sans-serif" font-size="21.3" fill="#111" textLength="50.7" lengthAdjust="spacingAndGlyphs" stroke="#111" stroke-width="0.4">Clear</text>
<polyline points="3100.6899999999996,332.59 3105.2,337.41 3109.71,332.59" fill="none" stroke="#333" stroke-width="2.8" stroke-linecap="round" stroke-linejoin="round"/>
<text x="3166.6" y="260" font-family="'Liberation Sans', sans-serif" font-size="33" fill="#3b78d8" textLength="20.8" lengthAdjust="spacingAndGlyphs" >A</text>
<path d="M3168.6 265.4 H3184.6 L3168.2 286.6 H3185.2" fill="none" stroke="#333" stroke-width="2" stroke-linejoin="miter"/>
<path d="M3192.4 249.4 H3221.9 V253.8 L3210.4 265 V278.4 H3204.4 V265 L3192.4 253.8 Z" fill="#f8f8f8" stroke="#333" stroke-width="2" stroke-linejoin="miter"/>
<polyline points="3238.49,260.39 3243,265.21000000000004 3247.51,260.39" fill="none" stroke="#333" stroke-width="2.8" stroke-linecap="round" stroke-linejoin="round"/>
<text x="3175.9" y="322" font-family="'Liberation Sans', sans-serif" font-size="21.3" fill="#111" textLength="61.5" lengthAdjust="spacingAndGlyphs" stroke="#111" stroke-width="0.4">Sort &amp;</text>
<text x="3182.2" y="345.8" font-family="'Liberation Sans', sans-serif" font-size="21.3" fill="#111" textLength="49.3" lengthAdjust="spacingAndGlyphs" stroke="#111" stroke-width="0.4">Filter</text>
<circle cx="3302.1" cy="255" r="19.4" fill="#f8f8f8" stroke="#333" stroke-width="2" />
<line x1="3287.4" y1="269.8" x2="3265.8" y2="291.2" stroke="#333" stroke-width="2.2" />
<polyline points="3338.49,260.39 3343,265.21000000000004 3347.51,260.39" fill="none" stroke="#333" stroke-width="2.8" stroke-linecap="round" stroke-linejoin="round"/>
<text x="3274" y="322" font-family="'Liberation Sans', sans-serif" font-size="21.3" fill="#111" textLength="62" lengthAdjust="spacingAndGlyphs" stroke="#111" stroke-width="0.4">Find &amp;</text>
<text x="3274" y="345.8" font-family="'Liberation Sans', sans-serif" font-size="21.3" fill="#111" textLength="62" lengthAdjust="spacingAndGlyphs" stroke="#111" stroke-width="0.4">Select</text>
<rect x="3376.5" y="234" width="1.8" height="123" fill="#cdcdcd" />
<rect x="3411" y="234.2" width="56" height="55.5" fill="#f8f9f9" stroke="#d9512c" stroke-width="2" />
<rect x="3416.3" y="239.1" width="20.5" height="20.5" fill="#f3f3f3" stroke="#d9512c" stroke-width="2" />
<rect x="3416.3" y="265.3" width="20.5" height="20.5" fill="#f3f3f3" stroke="#d9512c" stroke-width="2" />
<rect x="3441.6" y="239.1" width="20.5" height="20.5" fill="#f3f3f3" stroke="#d9512c" stroke-width="2" />
<rect x="3441.6" y="265.3" width="20.5" height="20.5" fill="#f3f3f3" stroke="#d9512c" stroke-width="2" />
<text x="3402" y="322" font-family="'Liberation Sans', sans-serif" font-size="21.3" fill="#111" textLength="77" lengthAdjust="spacingAndGlyphs" stroke="#111" stroke-width="0.4">Add-ins</text>
<rect x="3504.0" y="234" width="1.8" height="123" fill="#cdcdcd" />
<defs><linearGradient id="cpl" x1="0.3" y1="0" x2="0.5" y2="1"><stop offset="0" stop-color="#2a7cf0"/><stop offset="0.35" stop-color="#3a9fd8"/><stop offset="0.6" stop-color="#43b552"/><stop offset="0.95" stop-color="#ecd400"/></linearGradient><linearGradient id="cpr" x1="0.6" y1="0" x2="0.4" y2="1"><stop offset="0" stop-color="#9b22ee"/><stop offset="0.45" stop-color="#ea4a93"/><stop offset="1" stop-color="#fba438"/></linearGradient><linearGradient id="cpt" x1="0" y1="0" x2="1" y2="1"><stop offset="0" stop-color="#2a64e0"/><stop offset="1" stop-color="#4a14c0"/></linearGradient><linearGradient id="cpb" x1="0" y1="0" x2="1" y2="1"><stop offset="0" stop-color="#f07a2a"/><stop offset="1" stop-color="#c8362a"/></linearGradient></defs>
<path d="M3560 236 H3575.6 C3581 236 3581.6 242 3584 246.6 C3585.4 249.2 3587.6 249.4 3590 249.4 L3574 249.6 C3568.6 243 3564 239 3560 236 Z" fill="url(#cpt)" />
<path d="M3572 288 H3556.6 C3551 288 3550.4 282 3548 277.6 C3546.8 275.2 3544.4 275 3542 275 L3560 275 C3563.6 281 3567.6 285 3572 288 Z" fill="url(#cpb)" />
<path d="M3564 249 H3580 L3570 276 H3556 Z" fill="#fff" />
<path d="M3549 236.2 H3574 C3569.6 238.6 3566.4 243.6 3564.8 249.6 L3560 266.4 C3558.4 272 3556 275 3551.6 275 H3541.6 C3536.8 275 3535 271.2 3536.2 266.6 L3541.6 245 C3542.8 240 3545 236.2 3549 236.2 Z" fill="url(#cpl)" />
<path d="M3583 287.8 H3558 C3562.4 285.4 3565.6 280.4 3567.2 274.4 L3572 257.6 C3573.6 252 3576 249.4 3580.4 249.4 H3590.4 C3595.2 249.4 3597 252.8 3595.8 257.4 L3590.4 279 C3589.2 284 3587 287.8 3583 287.8 Z" fill="url(#cpr)" />
<text x="3530.7" y="322" font-family="'Liberation Sans', sans-serif" font-size="21.3" fill="#111" textLength="70.7" lengthAdjust="spacingAndGlyphs" stroke="#111" stroke-width="0.4">Copilot</text>
<rect x="3628.0" y="234" width="1.8" height="123" fill="#cdcdcd" />
<text x="3673.7" y="322" font-family="'Liberation Sans', sans-serif" font-size="21.3" fill="#111" textLength="53.4" lengthAdjust="spacingAndGlyphs" stroke="#111" stroke-width="0.4">Show</text>
<text x="3654.3" y="345.8" font-family="'Liberation Sans', sans-serif" font-size="21.3" fill="#111" textLength="93" lengthAdjust="spacingAndGlyphs" stroke="#111" stroke-width="0.4">Taskpane</text>
<rect x="0" y="363.7" width="170" height="55" fill="#c6c6c6" />
<rect x="1.8" y="368.1" width="166.2" height="47.7" fill="#fff" />
<text x="21" y="399.5" font-family="'Liberation Sans', sans-serif" font-size="24.6" fill="#222" textLength="44.2" lengthAdjust="spacingAndGlyphs" >N40</text>
<path d="M152.9 385.3 L159.9 374.3 L166.9 385.3 Z" fill="#6a6a6a" />
<path d="M152.9 397 L159.9 407.9 L166.9 397 Z" fill="#6a6a6a" />
<path d="M202 386.2 L220.2 403.6 M220.2 386.2 L202 403.6" fill="none" stroke="#d2d2d2" stroke-width="3.8" />
<path d="M258 396 L267.4 403.8 L282.4 386.4" fill="none" stroke="#d2d2d2" stroke-width="3.8" />
<text x="303.4" y="401.6" font-family="'Liberation Serif', serif" font-size="32" fill="#444" font-weight="700" font-style="italic" textLength="28.6" lengthAdjust="spacingAndGlyphs" >fx</text>
<polyline points="344.505,392.705 349.2,396.89500000000004 353.895,392.705" fill="none" stroke="#d0d0d0" stroke-width="2.6" stroke-linecap="round" stroke-linejoin="round"/>
<rect x="361.6" y="373.2" width="3476.8" height="38.9" fill="#fff" rx="3" stroke="#d4d4d4" stroke-width="1.6" />
<line x1="3792.8" y1="373.2" x2="3792.8" y2="412.1" stroke="#d4d4d4" stroke-width="1.6" />
<defs><linearGradient id="hdr" x1="0" y1="0" x2="0" y2="1"><stop offset="0" stop-color="#fbfbfb"/><stop offset="1" stop-color="#f4f4f4"/></linearGradient><linearGradient id="rhdr" x1="0" y1="0" x2="1" y2="0"><stop offset="0" stop-color="#fdfdfd"/><stop offset="1" stop-color="#f4f4f4"/></linearGradient><linearGradient id="rline" x1="0" y1="0" x2="1" y2="0"><stop offset="0" stop-color="#f8f8f8"/><stop offset="1" stop-color="#dddddd"/></linearGradient><linearGradient id="hsep" x1="0" y1="0" x2="0" y2="1"><stop offset="0" stop-color="#f4f4f4"/><stop offset="1" stop-color="#dcdcdc"/></linearGradient><clipPath id="gridclip"><rect x="0" y="424" width="2542" height="1954"/></clipPath></defs>
<g clip-path="url(#gridclip)">
<rect x="0" y="424" width="2542" height="1954" fill="#fff" />
<rect x="0" y="424" width="2542" height="71" fill="url(#hdr)" />
<rect x="0" y="495" width="73" height="1883" fill="url(#rhdr)" />
<rect x="630" y="424" width="2" height="71" fill="url(#hsep)" />
<rect x="630" y="547" width="2" height="1831" fill="#cacaca" />
<rect x="822" y="424" width="2" height="71" fill="url(#hsep)" />
<rect x="822" y="547" width="2" height="1831" fill="#cacaca" />
<rect x="964" y="424" width="2" height="71" fill="url(#hsep)" />
<rect x="964" y="547" width="2" height="1831" fill="#cacaca" />
<rect x="1106" y="424" width="2" height="71" fill="url(#hsep)" />
<rect x="1106" y="547" width="2" height="1831" fill="#cacaca" />
<rect x="1248" y="424" width="2" height="71" fill="url(#hsep)" />
<rect x="1248" y="547" width="2" height="1831" fill="#cacaca" />
<rect x="1390" y="424" width="2" height="71" fill="url(#hsep)" />
<rect x="1390" y="547" width="2" height="1831" fill="#cacaca" />
<rect x="1532" y="424" width="2" height="71" fill="url(#hsep)" />
<rect x="1532" y="495" width="2" height="1883" fill="#cacaca" />
<rect x="1742" y="424" width="2" height="71" fill="url(#hsep)" />
<rect x="1742" y="495" width="2" height="1883" fill="#cacaca" />
<rect x="1952" y="424" width="2" height="71" fill="url(#hsep)" />
<rect x="1952" y="495" width="2" height="1883" fill="#cacaca" />
<rect x="2162" y="424" width="2" height="71" fill="url(#hsep)" />
<rect x="2162" y="495" width="2" height="1883" fill="#cacaca" />
<rect x="2372" y="424" width="2" height="71" fill="url(#hsep)" />
<rect x="2372" y="495" width="2" height="1883" fill="#cacaca" />
<rect x="2582" y="424" width="2" height="71" fill="url(#hsep)" />
<rect x="73" y="546" width="2469" height="2" fill="#cacaca" />
<rect x="0" y="546" width="73" height="2" fill="url(#rline)" />
<rect x="73" y="598" width="2469" height="2" fill="#cacaca" />
<rect x="0" y="598" width="73" height="2" fill="url(#rline)" />
<rect x="73" y="650" width="2469" height="2" fill="#cacaca" />
<rect x="0" y="650" width="73" height="2" fill="url(#rline)" />
<rect x="73" y="702" width="2469" height="2" fill="#cacaca" />
<rect x="0" y="702" width="73" height="2" fill="url(#rline)" />
<rect x="73" y="754" width="2469" height="2" fill="#cacaca" />
<rect x="0" y="754" width="73" height="2" fill="url(#rline)" />
<rect x="73" y="806" width="2469" height="2" fill="#cacaca" />
<rect x="0" y="806" width="73" height="2" fill="url(#rline)" />
<rect x="73" y="858" width="2469" height="2" fill="#cacaca" />
<rect x="0" y="858" width="73" height="2" fill="url(#rline)" />
<rect x="73" y="910" width="2469" height="2" fill="#cacaca" />
<rect x="0" y="910" width="73" height="2" fill="url(#rline)" />
<rect x="73" y="962" width="2469" height="2" fill="#cacaca" />
<rect x="0" y="962" width="73" height="2" fill="url(#rline)" />
<rect x="73" y="1014" width="2469" height="2" fill="#cacaca" />
<rect x="0" y="1014" width="73" height="2" fill="url(#rline)" />
<rect x="73" y="1066" width="2469" height="2" fill="#cacaca" />
<rect x="0" y="1066" width="73" height="2" fill="url(#rline)" />
<rect x="73" y="1118" width="2469" height="2" fill="#cacaca" />
<rect x="0" y="1118" width="73" height="2" fill="url(#rline)" />
<rect x="73" y="1170" width="2469" height="2" fill="#cacaca" />
<rect x="0" y="1170" width="73" height="2" fill="url(#rline)" />
<rect x="73" y="1222" width="2469" height="2" fill="#cacaca" />
<rect x="0" y="1222" width="73" height="2" fill="url(#rline)" />
<rect x="73" y="1274" width="2469" height="2" fill="#cacaca" />
<rect x="0" y="1274" width="73" height="2" fill="url(#rline)" />
<rect x="73" y="1326" width="2469" height="2" fill="#cacaca" />
<rect x="0" y="1326" width="73" height="2" fill="url(#rline)" />
<rect x="73" y="1378" width="2469" height="2" fill="#cacaca" />
<rect x="0" y="1378" width="73" height="2" fill="url(#rline)" />
<rect x="73" y="1430" width="2469" height="2" fill="#cacaca" />
<rect x="0" y="1430" width="73" height="2" fill="url(#rline)" />
<rect x="73" y="1482" width="2469" height="2" fill="#cacaca" />
<rect x="0" y="1482" width="73" height="2" fill="url(#rline)" />
<rect x="73" y="1534" width="2469" height="2" fill="#cacaca" />
<rect x="0" y="1534" width="73" height="2" fill="url(#rline)" />
<rect x="73" y="1586" width="2469" height="2" fill="#cacaca" />
<rect x="0" y="1586" width="73" height="2" fill="url(#rline)" />
<rect x="73" y="1638" width="2469" height="2" fill="#cacaca" />
<rect x="0" y="1638" width="73" height="2" fill="url(#rline)" />
<rect x="73" y="1690" width="2469" height="2" fill="#cacaca" />
<rect x="0" y="1690" width="73" height="2" fill="url(#rline)" />
<rect x="73" y="1742" width="2469" height="2" fill="#cacaca" />
<rect x="0" y="1742" width="73" height="2" fill="url(#rline)" />
<rect x="73" y="1794" width="2469" height="2" fill="#cacaca" />
<rect x="0" y="1794" width="73" height="2" fill="url(#rline)" />
<rect x="73" y="1846" width="2469" height="2" fill="#cacaca" />
<rect x="0" y="1846" width="73" height="2" fill="url(#rline)" />
<rect x="73" y="1898" width="2469" height="2" fill="#cacaca" />
<rect x="0" y="1898" width="73" height="2" fill="url(#rline)" />
<rect x="73" y="1950" width="2469" height="2" fill="#cacaca" />
<rect x="0" y="1950" width="73" height="2" fill="url(#rline)" />
<rect x="73" y="2002" width="2469" height="2" fill="#cacaca" />
<rect x="0" y="2002" width="73" height="2" fill="url(#rline)" />
<rect x="73" y="2054" width="2469" height="2" fill="#cacaca" />
<rect x="0" y="2054" width="73" height="2" fill="url(#rline)" />
<rect x="73" y="2106" width="2469" height="2" fill="#cacaca" />
<rect x="0" y="2106" width="73" height="2" fill="url(#rline)" />
<rect x="73" y="2158" width="2469" height="2" fill="#cacaca" />
<rect x="0" y="2158" width="73" height="2" fill="url(#rline)" />
<rect x="73" y="2210" width="2469" height="2" fill="#cacaca" />
<rect x="0" y="2210" width="73" height="2" fill="url(#rline)" />
<rect x="73" y="2262" width="2469" height="2" fill="#cacaca" />
<rect x="0" y="2262" width="73" height="2" fill="url(#rline)" />
<rect x="73" y="2314" width="2469" height="2" fill="#cacaca" />
<rect x="0" y="2314" width="73" height="2" fill="url(#rline)" />
<rect x="73" y="2366" width="2469" height="2" fill="#cacaca" />
<rect x="0" y="2366" width="73" height="2" fill="url(#rline)" />
<rect x="73" y="2418" width="2469" height="2" fill="#cacaca" />
<rect x="0" y="2418" width="73" height="2" fill="url(#rline)" />
<rect x="74" y="496" width="1460" height="52" fill="#4f57be" />
<rect x="74" y="598" width="558" height="54" fill="#d6daf0" />
<rect x="74" y="1014" width="558" height="54" fill="#d6daf0" />
<rect x="74" y="1794" width="558" height="54" fill="#d6daf0" />
<rect x="74" y="2002" width="558" height="54" fill="#d6daf0" />
<rect x="72" y="424" width="2" height="1954" fill="#b4b4b4" />
<rect x="0" y="494" width="2542" height="2" fill="#b8b8b8" />
<path d="M68.5 432.5 L68.5 490 L10 490 Z" fill="#d8d8d8" />
<text x="352.0" y="471.8" font-family="'Liberation Sans', sans-serif" font-size="35.4" fill="#444" text-anchor="middle" stroke="#444" stroke-width="0.4">A</text>
<text x="727.0" y="471.8" font-family="'Liberation Sans', sans-serif" font-size="35.4" fill="#444" text-anchor="middle" stroke="#444" stroke-width="0.4">B</text>
<text x="894.0" y="471.8" font-family="'Liberation Sans', sans-serif" font-size="35.4" fill="#444" text-anchor="middle" stroke="#444" stroke-width="0.4">C</text>
<text x="1036.0" y="471.8" font-family="'Liberation Sans', sans-serif" font-size="35.4" fill="#444" text-anchor="middle" stroke="#444" stroke-width="0.4">D</text>
<text x="1178.0" y="471.8" font-family="'Liberation Sans', sans-serif" font-size="35.4" fill="#444" text-anchor="middle" stroke="#444" stroke-width="0.4">E</text>
<text x="1320.0" y="471.8" font-family="'Liberation Sans', sans-serif" font-size="35.4" fill="#444" text-anchor="middle" stroke="#444" stroke-width="0.4">F</text>
<text x="1462.0" y="471.8" font-family="'Liberation Sans', sans-serif" font-size="35.4" fill="#444" text-anchor="middle" stroke="#444" stroke-width="0.4">G</text>
<text x="1638.0" y="471.8" font-family="'Liberation Sans', sans-serif" font-size="35.4" fill="#444" text-anchor="middle" stroke="#444" stroke-width="0.4">H</text>
<text x="1848.0" y="471.8" font-family="'Liberation Sans', sans-serif" font-size="35.4" fill="#444" text-anchor="middle" stroke="#444" stroke-width="0.4">I</text>
<text x="2058.0" y="471.8" font-family="'Liberation Sans', sans-serif" font-size="35.4" fill="#444" text-anchor="middle" stroke="#444" stroke-width="0.4">J</text>
<text x="2268.0" y="471.8" font-family="'Liberation Sans', sans-serif" font-size="35.4" fill="#444" text-anchor="middle" stroke="#444" stroke-width="0.4">K</text>
<text x="2478.0" y="471.8" font-family="'Liberation Sans', sans-serif" font-size="35.4" fill="#444" text-anchor="middle" stroke="#444" stroke-width="0.4">L</text>
<text x="36.3" y="535.7" font-family="'Liberation Sans', sans-serif" font-size="35.6" fill="#4a4a4a" text-anchor="middle" stroke="#4a4a4a" stroke-width="0.5">1</text>
<text x="36.3" y="587.7" font-family="'Liberation Sans', sans-serif" font-size="35.6" fill="#4a4a4a" text-anchor="middle" stroke="#4a4a4a" stroke-width="0.5">2</text>
<text x="36.3" y="639.7" font-family="'Liberation Sans', sans-serif" font-size="35.6" fill="#4a4a4a" text-anchor="middle" stroke="#4a4a4a" stroke-width="0.5">3</text>
<text x="36.3" y="691.7" font-family="'Liberation Sans', sans-serif" font-size="35.6" fill="#4a4a4a" text-anchor="middle" stroke="#4a4a4a" stroke-width="0.5">4</text>
<text x="36.3" y="743.7" font-family="'Liberation Sans', sans-serif" font-size="35.6" fill="#4a4a4a" text-anchor="middle" stroke="#4a4a4a" stroke-width="0.5">5</text>
<text x="36.3" y="795.7" font-family="'Liberation Sans', sans-serif" font-size="35.6" fill="#4a4a4a" text-anchor="middle" stroke="#4a4a4a" stroke-width="0.5">6</text>
<text x="36.3" y="847.7" font-family="'Liberation Sans', sans-serif" font-size="35.6" fill="#4a4a4a" text-anchor="middle" stroke="#4a4a4a" stroke-width="0.5">7</text>
<text x="36.3" y="899.7" font-family="'Liberation Sans', sans-serif" font-size="35.6" fill="#4a4a4a" text-anchor="middle" stroke="#4a4a4a" stroke-width="0.5">8</text>
<text x="36.3" y="951.7" font-family="'Liberation Sans', sans-serif" font-size="35.6" fill="#4a4a4a" text-anchor="middle" stroke="#4a4a4a" stroke-width="0.5">9</text>
<text x="36.3" y="1003.7" font-family="'Liberation Sans', sans-serif" font-size="35.6" fill="#4a4a4a" text-anchor="middle" stroke="#4a4a4a" stroke-width="0.5">10</text>
<text x="36.3" y="1055.7" font-family="'Liberation Sans', sans-serif" font-size="35.6" fill="#4a4a4a" text-anchor="middle" stroke="#4a4a4a" stroke-width="0.5">11</text>
<text x="36.3" y="1107.7" font-family="'Liberation Sans', sans-serif" font-size="35.6" fill="#4a4a4a" text-anchor="middle" stroke="#4a4a4a" stroke-width="0.5">12</text>
<text x="36.3" y="1159.7" font-family="'Liberation Sans', sans-serif" font-size="35.6" fill="#4a4a4a" text-anchor="middle" stroke="#4a4a4a" stroke-width="0.5">13</text>
<text x="36.3" y="1211.7" font-family="'Liberation Sans', sans-serif" font-size="35.6" fill="#4a4a4a" text-anchor="middle" stroke="#4a4a4a" stroke-width="0.5">14</text>
<text x="36.3" y="1263.7" font-family="'Liberation Sans', sans-serif" font-size="35.6" fill="#4a4a4a" text-anchor="middle" stroke="#4a4a4a" stroke-width="0.5">15</text>
<text x="36.3" y="1315.7" font-family="'Liberation Sans', sans-serif" font-size="35.6" fill="#4a4a4a" text-anchor="middle" stroke="#4a4a4a" stroke-width="0.5">16</text>
<text x="36.3" y="1367.7" font-family="'Liberation Sans', sans-serif" font-size="35.6" fill="#4a4a4a" text-anchor="middle" stroke="#4a4a4a" stroke-width="0.5">17</text>
<text x="36.3" y="1419.7" font-family="'Liberation Sans', sans-serif" font-size="35.6" fill="#4a4a4a" text-anchor="middle" stroke="#4a4a4a" stroke-width="0.5">18</text>
<text x="36.3" y="1471.7" font-family="'Liberation Sans', sans-serif" font-size="35.6" fill="#4a4a4a" text-anchor="middle" stroke="#4a4a4a" stroke-width="0.5">19</text>
<text x="36.3" y="1523.7" font-family="'Liberation Sans', sans-serif" font-size="35.6" fill="#4a4a4a" text-anchor="middle" stroke="#4a4a4a" stroke-width="0.5">20</text>
<text x="36.3" y="1575.7" font-family="'Liberation Sans', sans-serif" font-size="35.6" fill="#4a4a4a" text-anchor="middle" stroke="#4a4a4a" stroke-width="0.5">21</text>
<text x="36.3" y="1627.7" font-family="'Liberation Sans', sans-serif" font-size="35.6" fill="#4a4a4a" text-anchor="middle" stroke="#4a4a4a" stroke-width="0.5">22</text>
<text x="36.3" y="1679.7" font-family="'Liberation Sans', sans-serif" font-size="35.6" fill="#4a4a4a" text-anchor="middle" stroke="#4a4a4a" stroke-width="0.5">23</text>
<text x="36.3" y="1731.7" font-family="'Liberation Sans', sans-serif" font-size="35.6" fill="#4a4a4a" text-anchor="middle" stroke="#4a4a4a" stroke-width="0.5">24</text>
<text x="36.3" y="1783.7" font-family="'Liberation Sans', sans-serif" font-size="35.6" fill="#4a4a4a" text-anchor="middle" stroke="#4a4a4a" stroke-width="0.5">25</text>
<text x="36.3" y="1835.7" font-family="'Liberation Sans', sans-serif" font-size="35.6" fill="#4a4a4a" text-anchor="middle" stroke="#4a4a4a" stroke-width="0.5">26</text>
<text x="36.3" y="1887.7" font-family="'Liberation Sans', sans-serif" font-size="35.6" fill="#4a4a4a" text-anchor="middle" stroke="#4a4a4a" stroke-width="0.5">27</text>
<text x="36.3" y="1939.7" font-family="'Liberation Sans', sans-serif" font-size="35.6" fill="#4a4a4a" text-anchor="middle" stroke="#4a4a4a" stroke-width="0.5">28</text>
<text x="36.3" y="1991.7" font-family="'Liberation Sans', sans-serif" font-size="35.6" fill="#4a4a4a" text-anchor="middle" stroke="#4a4a4a" stroke-width="0.5">29</text>
<text x="36.3" y="2043.7" font-family="'Liberation Sans', sans-serif" font-size="35.6" fill="#4a4a4a" text-anchor="middle" stroke="#4a4a4a" stroke-width="0.5">30</text>
<text x="36.3" y="2095.7" font-family="'Liberation Sans', sans-serif" font-size="35.6" fill="#4a4a4a" text-anchor="middle" stroke="#4a4a4a" stroke-width="0.5">31</text>
<text x="36.3" y="2147.7" font-family="'Liberation Sans', sans-serif" font-size="35.6" fill="#4a4a4a" text-anchor="middle" stroke="#4a4a4a" stroke-width="0.5">32</text>
<text x="36.3" y="2199.7" font-family="'Liberation Sans', sans-serif" font-size="35.6" fill="#4a4a4a" text-anchor="middle" stroke="#4a4a4a" stroke-width="0.5">33</text>
<text x="36.3" y="2251.7" font-family="'Liberation Sans', sans-serif" font-size="35.6" fill="#4a4a4a" text-anchor="middle" stroke="#4a4a4a" stroke-width="0.5">34</text>
<text x="36.3" y="2303.7" font-family="'Liberation Sans', sans-serif" font-size="35.6" fill="#4a4a4a" text-anchor="middle" stroke="#4a4a4a" stroke-width="0.5">35</text>
<text x="36.3" y="2355.7" font-family="'Liberation Sans', sans-serif" font-size="35.6" fill="#4a4a4a" text-anchor="middle" stroke="#4a4a4a" stroke-width="0.5">36</text>
<text x="79.9" y="535.8" font-family="'Liberation Sans', sans-serif" font-size="36" fill="#fff" font-weight="700" textLength="322.7" lengthAdjust="spacingAndGlyphs" >DCF Valuation Model</text>
<text x="79.9" y="639.8" font-family="'Liberation Sans', sans-serif" font-size="36" fill="#000" font-weight="700" textLength="206" lengthAdjust="spacingAndGlyphs" >Assumptions</text>
<text x="79.9" y="691.8" font-family="'Liberation Sans', sans-serif" font-size="36" fill="#000" textLength="96" lengthAdjust="spacingAndGlyphs" stroke="#000" stroke-width="0.45">WACC</text>
<text x="79.9" y="743.8" font-family="'Liberation Sans', sans-serif" font-size="36" fill="#000" textLength="329.4" lengthAdjust="spacingAndGlyphs" stroke="#000" stroke-width="0.45">Terminal Growth Rate</text>
<text x="79.9" y="795.8" font-family="'Liberation Sans', sans-serif" font-size="36" fill="#000" textLength="127.2" lengthAdjust="spacingAndGlyphs" stroke="#000" stroke-width="0.45">Tax Rate</text>
<text x="79.9" y="847.8" font-family="'Liberation Sans', sans-serif" font-size="36" fill="#000" textLength="200.8" lengthAdjust="spacingAndGlyphs" stroke="#000" stroke-width="0.45">Current Cash</text>
<text x="79.9" y="899.8" font-family="'Liberation Sans', sans-serif" font-size="36" fill="#000" textLength="198.2" lengthAdjust="spacingAndGlyphs" stroke="#000" stroke-width="0.45">Current Debt</text>
<text x="79.9" y="951.8" font-family="'Liberation Sans', sans-serif" font-size="36" fill="#000" textLength="300.3" lengthAdjust="spacingAndGlyphs" stroke="#000" stroke-width="0.45">Shares Outstanding</text>
<text x="79.9" y="1055.8" font-family="'Liberation Sans', sans-serif" font-size="36" fill="#000" font-weight="700" textLength="177.5" lengthAdjust="spacingAndGlyphs" >Projections</text>
<text x="79.9" y="1107.8" font-family="'Liberation Sans', sans-serif" font-size="36" fill="#000" textLength="65.3" lengthAdjust="spacingAndGlyphs" stroke="#000" stroke-width="0.45">Year</text>
<text x="79.9" y="1159.8" font-family="'Liberation Sans', sans-serif" font-size="36" fill="#000" textLength="129.9" lengthAdjust="spacingAndGlyphs" stroke="#000" stroke-width="0.45">Revenue</text>
<text x="79.9" y="1211.8" font-family="'Liberation Sans', sans-serif" font-size="36" fill="#000" textLength="285.8" lengthAdjust="spacingAndGlyphs" stroke="#000" stroke-width="0.45">Revenue Growth %</text>
<text x="79.9" y="1263.8" font-family="'Liberation Sans', sans-serif" font-size="36" fill="#000" textLength="111" lengthAdjust="spacingAndGlyphs" stroke="#000" stroke-width="0.45">EBITDA</text>
<text x="79.9" y="1315.8" font-family="'Liberation Sans', sans-serif" font-size="36" fill="#000" textLength="258.1" lengthAdjust="spacingAndGlyphs" stroke="#000" stroke-width="0.45">EBITDA Margin %</text>
<text x="79.9" y="1367.8" font-family="'Liberation Sans', sans-serif" font-size="36" fill="#000" textLength="64.5" lengthAdjust="spacingAndGlyphs" stroke="#000" stroke-width="0.45">D&amp;A</text>
<text x="79.9" y="1419.8" font-family="'Liberation Sans', sans-serif" font-size="36" fill="#000" textLength="372.4" lengthAdjust="spacingAndGlyphs" stroke="#000" stroke-width="0.45">EBIT (Operating Income)</text>
<text x="79.9" y="1471.8" font-family="'Liberation Sans', sans-serif" font-size="36" fill="#000" textLength="83.4" lengthAdjust="spacingAndGlyphs" stroke="#000" stroke-width="0.45">Taxes</text>
<text x="79.9" y="1523.8" font-family="'Liberation Sans', sans-serif" font-size="36" fill="#000" textLength="222.6" lengthAdjust="spacingAndGlyphs" stroke="#000" stroke-width="0.45">EBIAT (NOPAT)</text>
<text x="79.9" y="1575.8" font-family="'Liberation Sans', sans-serif" font-size="36" fill="#000" textLength="148.7" lengthAdjust="spacingAndGlyphs" stroke="#000" stroke-width="0.45">Plus: D&amp;A</text>
<text x="79.9" y="1627.8" font-family="'Liberation Sans', sans-serif" font-size="36" fill="#000" textLength="182" lengthAdjust="spacingAndGlyphs" stroke="#000" stroke-width="0.45">Less: CapEx</text>
<text x="79.9" y="1679.8" font-family="'Liberation Sans', sans-serif" font-size="36" fill="#000" textLength="323.5" lengthAdjust="spacingAndGlyphs" stroke="#000" stroke-width="0.45">Less: Change in NWC</text>
<text x="79.9" y="1731.8" font-family="'Liberation Sans', sans-serif" font-size="36" fill="#000" textLength="508.2" lengthAdjust="spacingAndGlyphs" stroke="#000" stroke-width="0.45">Unlevered Free Cash Flow (UFCF)</text>
<text x="79.9" y="1835.8" font-family="'Liberation Sans', sans-serif" font-size="36" fill="#000" font-weight="700" textLength="416.8" lengthAdjust="spacingAndGlyphs" >Terminal Value Calculation</text>
<text x="79.9" y="1887.8" font-family="'Liberation Sans', sans-serif" font-size="36" fill="#000" textLength="242" lengthAdjust="spacingAndGlyphs" stroke="#000" stroke-width="0.45">Discount Factor</text>
<text x="79.9" y="1939.8" font-family="'Liberation Sans', sans-serif" font-size="36" fill="#000" textLength="338.8" lengthAdjust="spacingAndGlyphs" stroke="#000" stroke-width="0.45">Present Value of UFCF</text>
<text x="79.9" y="2043.8" font-family="'Liberation Sans', sans-serif" font-size="36" fill="#000" font-weight="700" textLength="300.6" lengthAdjust="spacingAndGlyphs" >Valuation Summary</text>
<text x="79.9" y="2095.8" font-family="'Liberation Sans', sans-serif" font-size="36" fill="#000" textLength="402.8" lengthAdjust="spacingAndGlyphs" stroke="#000" stroke-width="0.45">PV of Cash Flows (Stage 1)</text>
<text x="79.9" y="2147.8" font-family="'Liberation Sans', sans-serif" font-size="36" fill="#000" textLength="456" lengthAdjust="spacingAndGlyphs" stroke="#000" stroke-width="0.45">PV of Terminal Value (Stage 2)</text>
<text x="79.9" y="2199.8" font-family="'Liberation Sans', sans-serif" font-size="36" fill="#000" textLength="248.5" lengthAdjust="spacingAndGlyphs" stroke="#000" stroke-width="0.45">Enterprise Value</text>
<text x="79.9" y="2251.8" font-family="'Liberation Sans', sans-serif" font-size="36" fill="#000" textLength="431.9" lengthAdjust="spacingAndGlyphs" stroke="#000" stroke-width="0.45">Less: Net Debt (Debt - Cash)</text>
<text x="79.9" y="2303.8" font-family="'Liberation Sans', sans-serif" font-size="36" fill="#000" textLength="188.2" lengthAdjust="spacingAndGlyphs" stroke="#000" stroke-width="0.45">Equity Value</text>
<text x="79.9" y="2355.8" font-family="'Liberation Sans', sans-serif" font-size="36" fill="#000" font-weight="700" textLength="299.6" lengthAdjust="spacingAndGlyphs" >Implied Share Price</text>
<text x="815.7" y="691.8" font-family="'Liberation Sans', sans-serif" font-size="36" fill="#000" text-anchor="end" textLength="95.5" lengthAdjust="spacingAndGlyphs" stroke="#000" stroke-width="0.45">10.0%</text>
<text x="815.7" y="743.8" font-family="'Liberation Sans', sans-serif" font-size="36" fill="#000" text-anchor="end" textLength="76.7" lengthAdjust="spacingAndGlyphs" stroke="#000" stroke-width="0.45">2.0%</text>
<text x="815.7" y="795.8" font-family="'Liberation Sans', sans-serif" font-size="36" fill="#000" text-anchor="end" textLength="95.5" lengthAdjust="spacingAndGlyphs" stroke="#000" stroke-width="0.45">21.0%</text>
<text x="815.7" y="847.8" font-family="'Liberation Sans', sans-serif" font-size="36" fill="#000" text-anchor="end" textLength="126.5" lengthAdjust="spacingAndGlyphs" stroke="#000" stroke-width="0.45">$500.00</text>
<text x="815.7" y="899.8" font-family="'Liberation Sans', sans-serif" font-size="36" fill="#000" text-anchor="end" textLength="155.7" lengthAdjust="spacingAndGlyphs" stroke="#000" stroke-width="0.45">$1,500.00</text>
<text x="815.7" y="951.8" font-family="'Liberation Sans', sans-serif" font-size="36" fill="#000" text-anchor="end" textLength="58.4" lengthAdjust="spacingAndGlyphs" stroke="#000" stroke-width="0.45">100</text>
<text x="815.7" y="1107.8" font-family="'Liberation Sans', sans-serif" font-size="36" fill="#000" text-anchor="end" textLength="19.5" lengthAdjust="spacingAndGlyphs" stroke="#000" stroke-width="0.45">0</text>
<text x="957.7" y="1107.8" font-family="'Liberation Sans', sans-serif" font-size="36" fill="#000" text-anchor="end" textLength="19.5" lengthAdjust="spacingAndGlyphs" stroke="#000" stroke-width="0.45">1</text>
<text x="1099.7" y="1107.8" font-family="'Liberation Sans', sans-serif" font-size="36" fill="#000" text-anchor="end" textLength="19.5" lengthAdjust="spacingAndGlyphs" stroke="#000" stroke-width="0.45">2</text>
<text x="1241.7" y="1107.8" font-family="'Liberation Sans', sans-serif" font-size="36" fill="#000" text-anchor="end" textLength="19.5" lengthAdjust="spacingAndGlyphs" stroke="#000" stroke-width="0.45">3</text>
<text x="1383.7" y="1107.8" font-family="'Liberation Sans', sans-serif" font-size="36" fill="#000" text-anchor="end" textLength="19.5" lengthAdjust="spacingAndGlyphs" stroke="#000" stroke-width="0.45">4</text>
<text x="1525.7" y="1107.8" font-family="'Liberation Sans', sans-serif" font-size="36" fill="#000" text-anchor="end" textLength="19.5" lengthAdjust="spacingAndGlyphs" stroke="#000" stroke-width="0.45">5</text>
<text x="815.7" y="1159.8" font-family="'Liberation Sans', sans-serif" font-size="36" fill="#000" text-anchor="end" textLength="77.8" lengthAdjust="spacingAndGlyphs" stroke="#000" stroke-width="0.45">1000</text>
<text x="957.7" y="1159.8" font-family="'Liberation Sans', sans-serif" font-size="36" fill="#000" text-anchor="end" textLength="87.6" lengthAdjust="spacingAndGlyphs" stroke="#000" stroke-width="0.45">$0.00</text>
<text x="957.7" y="1211.8" font-family="'Liberation Sans', sans-serif" font-size="36" fill="#000" text-anchor="end" textLength="76.7" lengthAdjust="spacingAndGlyphs" stroke="#000" stroke-width="0.45">0.0%</text>
<text x="957.7" y="1263.8" font-family="'Liberation Sans', sans-serif" font-size="36" fill="#000" text-anchor="end" textLength="87.6" lengthAdjust="spacingAndGlyphs" stroke="#000" stroke-width="0.45">$0.00</text>
<text x="957.7" y="1315.8" font-family="'Liberation Sans', sans-serif" font-size="36" fill="#000" text-anchor="end" textLength="76.7" lengthAdjust="spacingAndGlyphs" stroke="#000" stroke-width="0.45">0.0%</text>
<text x="957.7" y="1367.8" font-family="'Liberation Sans', sans-serif" font-size="36" fill="#000" text-anchor="end" textLength="87.6" lengthAdjust="spacingAndGlyphs" stroke="#000" stroke-width="0.45">$0.00</text>
<text x="957.7" y="1419.8" font-family="'Liberation Sans', sans-serif" font-size="36" fill="#000" text-anchor="end" textLength="87.6" lengthAdjust="spacingAndGlyphs" stroke="#000" stroke-width="0.45">$0.00</text>
<text x="957.7" y="1523.8" font-family="'Liberation Sans', sans-serif" font-size="36" fill="#000" text-anchor="end" textLength="87.6" lengthAdjust="spacingAndGlyphs" stroke="#000" stroke-width="0.45">$0.00</text>
<text x="957.7" y="1575.8" font-family="'Liberation Sans', sans-serif" font-size="36" fill="#000" text-anchor="end" textLength="87.6" lengthAdjust="spacingAndGlyphs" stroke="#000" stroke-width="0.45">$0.00</text>
<text x="957.7" y="1627.8" font-family="'Liberation Sans', sans-serif" font-size="36" fill="#000" text-anchor="end" textLength="107.0" lengthAdjust="spacingAndGlyphs" stroke="#000" stroke-width="0.45">$60.00</text>
<text x="957.7" y="1679.8" font-family="'Liberation Sans', sans-serif" font-size="36" fill="#000" text-anchor="end" textLength="107.0" lengthAdjust="spacingAndGlyphs" stroke="#000" stroke-width="0.45">$10.00</text>
<text x="1099.7" y="1159.8" font-family="'Liberation Sans', sans-serif" font-size="36" fill="#000" text-anchor="end" textLength="87.6" lengthAdjust="spacingAndGlyphs" stroke="#000" stroke-width="0.45">$0.00</text>
<text x="1099.7" y="1211.8" font-family="'Liberation Sans', sans-serif" font-size="36" fill="#000" text-anchor="end" textLength="76.7" lengthAdjust="spacingAndGlyphs" stroke="#000" stroke-width="0.45">0.0%</text>
<text x="1099.7" y="1263.8" font-family="'Liberation Sans', sans-serif" font-size="36" fill="#000" text-anchor="end" textLength="87.6" lengthAdjust="spacingAndGlyphs" stroke="#000" stroke-width="0.45">$0.00</text>
<text x="1099.7" y="1315.8" font-family="'Liberation Sans', sans-serif" font-size="36" fill="#000" text-anchor="end" textLength="76.7" lengthAdjust="spacingAndGlyphs" stroke="#000" stroke-width="0.45">0.0%</text>
<text x="1099.7" y="1367.8" font-family="'Liberation Sans', sans-serif" font-size="36" fill="#000" text-anchor="end" textLength="87.6" lengthAdjust="spacingAndGlyphs" stroke="#000" stroke-width="0.45">$0.00</text>
<text x="1099.7" y="1419.8" font-family="'Liberation Sans', sans-serif" font-size="36" fill="#000" text-anchor="end" textLength="87.6" lengthAdjust="spacingAndGlyphs" stroke="#000" stroke-width="0.45">$0.00</text>
<text x="1099.7" y="1523.8" font-family="'Liberation Sans', sans-serif" font-size="36" fill="#000" text-anchor="end" textLength="87.6" lengthAdjust="spacingAndGlyphs" stroke="#000" stroke-width="0.45">$0.00</text>
<text x="1099.7" y="1575.8" font-family="'Liberation Sans', sans-serif" font-size="36" fill="#000" text-anchor="end" textLength="87.6" lengthAdjust="spacingAndGlyphs" stroke="#000" stroke-width="0.45">$0.00</text>
<text x="1099.7" y="1627.8" font-family="'Liberation Sans', sans-serif" font-size="36" fill="#000" text-anchor="end" textLength="107.0" lengthAdjust="spacingAndGlyphs" stroke="#000" stroke-width="0.45">$60.00</text>
<text x="1099.7" y="1679.8" font-family="'Liberation Sans', sans-serif" font-size="36" fill="#000" text-anchor="end" textLength="107.0" lengthAdjust="spacingAndGlyphs" stroke="#000" stroke-width="0.45">$10.00</text>
<text x="1241.7" y="1159.8" font-family="'Liberation Sans', sans-serif" font-size="36" fill="#000" text-anchor="end" textLength="87.6" lengthAdjust="spacingAndGlyphs" stroke="#000" stroke-width="0.45">$0.00</text>
<text x="1241.7" y="1211.8" font-family="'Liberation Sans', sans-serif" font-size="36" fill="#000" text-anchor="end" textLength="76.7" lengthAdjust="spacingAndGlyphs" stroke="#000" stroke-width="0.45">0.0%</text>
<text x="1241.7" y="1263.8" font-family="'Liberation Sans', sans-serif" font-size="36" fill="#000" text-anchor="end" textLength="87.6" lengthAdjust="spacingAndGlyphs" stroke="#000" stroke-width="0.45">$0.00</text>
<text x="1241.7" y="1315.8" font-family="'Liberation Sans', sans-serif" font-size="36" fill="#000" text-anchor="end" textLength="76.7" lengthAdjust="spacingAndGlyphs" stroke="#000" stroke-width="0.45">0.0%</text>
<text x="1241.7" y="1367.8" font-family="'Liberation Sans', sans-serif" font-size="36" fill="#000" text-anchor="end" textLength="87.6" lengthAdjust="spacingAndGlyphs" stroke="#000" stroke-width="0.45">$0.00</text>
<text x="1241.7" y="1419.8" font-family="'Liberation Sans', sans-serif" font-size="36" fill="#000" text-anchor="end" textLength="87.6" lengthAdjust="spacingAndGlyphs" stroke="#000" stroke-width="0.45">$0.00</text>
<text x="1241.7" y="1523.8" font-family="'Liberation Sans', sans-serif" font-size="36" fill="#000" text-anchor="end" textLength="87.6" lengthAdjust="spacingAndGlyphs" stroke="#000" stroke-width="0.45">$0.00</text>
<text x="1241.7" y="1575.8" font-family="'Liberation Sans', sans-serif" font-size="36" fill="#000" text-anchor="end" textLength="87.6" lengthAdjust="spacingAndGlyphs" stroke="#000" stroke-width="0.45">$0.00</text>
<text x="1241.7" y="1627.8" font-family="'Liberation Sans', sans-serif" font-size="36" fill="#000" text-anchor="end" textLength="107.0" lengthAdjust="spacingAndGlyphs" stroke="#000" stroke-width="0.45">$60.00</text>
<text x="1241.7" y="1679.8" font-family="'Liberation Sans', sans-serif" font-size="36" fill="#000" text-anchor="end" textLength="107.0" lengthAdjust="spacingAndGlyphs" stroke="#000" stroke-width="0.45">$10.00</text>
<text x="1383.7" y="1159.8" font-family="'Liberation Sans', sans-serif" font-size="36" fill="#000" text-anchor="end" textLength="87.6" lengthAdjust="spacingAndGlyphs" stroke="#000" stroke-width="0.45">$0.00</text>
<text x="1383.7" y="1211.8" font-family="'Liberation Sans', sans-serif" font-size="36" fill="#000" text-anchor="end" textLength="76.7" lengthAdjust="spacingAndGlyphs" stroke="#000" stroke-width="0.45">0.0%</text>
<text x="1383.7" y="1263.8" font-family="'Liberation Sans', sans-serif" font-size="36" fill="#000" text-anchor="end" textLength="87.6" lengthAdjust="spacingAndGlyphs" stroke="#000" stroke-width="0.45">$0.00</text>
<text x="1383.7" y="1315.8" font-family="'Liberation Sans', sans-serif" font-size="36" fill="#000" text-anchor="end" textLength="76.7" lengthAdjust="spacingAndGlyphs" stroke="#000" stroke-width="0.45">0.0%</text>
<text x="1383.7" y="1367.8" font-family="'Liberation Sans', sans-serif" font-size="36" fill="#000" text-anchor="end" textLength="87.6" lengthAdjust="spacingAndGlyphs" stroke="#000" stroke-width="0.45">$0.00</text>
<text x="1383.7" y="1419.8" font-family="'Liberation Sans', sans-serif" font-size="36" fill="#000" text-anchor="end" textLength="87.6" lengthAdjust="spacingAndGlyphs" stroke="#000" stroke-width="0.45">$0.00</text>
<text x="1383.7" y="1523.8" font-family="'Liberation Sans', sans-serif" font-size="36" fill="#000" text-anchor="end" textLength="87.6" lengthAdjust="spacingAndGlyphs" stroke="#000" stroke-width="0.45">$0.00</text>
<text x="1383.7" y="1575.8" font-family="'Liberation Sans', sans-serif" font-size="36" fill="#000" text-anchor="end" textLength="87.6" lengthAdjust="spacingAndGlyphs" stroke="#000" stroke-width="0.45">$0.00</text>
<text x="1383.7" y="1627.8" font-family="'Liberation Sans', sans-serif" font-size="36" fill="#000" text-anchor="end" textLength="107.0" lengthAdjust="spacingAndGlyphs" stroke="#000" stroke-width="0.45">$60.00</text>
<text x="1383.7" y="1679.8" font-family="'Liberation Sans', sans-serif" font-size="36" fill="#000" text-anchor="end" textLength="107.0" lengthAdjust="spacingAndGlyphs" stroke="#000" stroke-width="0.45">$10.00</text>
<text x="1525.7" y="1159.8" font-family="'Liberation Sans', sans-serif" font-size="36" fill="#000" text-anchor="end" textLength="87.6" lengthAdjust="spacingAndGlyphs" stroke="#000" stroke-width="0.45">$0.00</text>
<text x="1525.7" y="1211.8" font-family="'Liberation Sans', sans-serif" font-size="36" fill="#000" text-anchor="end" textLength="76.7" lengthAdjust="spacingAndGlyphs" stroke="#000" stroke-width="0.45">0.0%</text>
<text x="1525.7" y="1263.8" font-family="'Liberation Sans', sans-serif" font-size="36" fill="#000" text-anchor="end" textLength="87.6" lengthAdjust="spacingAndGlyphs" stroke="#000" stroke-width="0.45">$0.00</text>
<text x="1525.7" y="1315.8" font-family="'Liberation Sans', sans-serif" font-size="36" fill="#000" text-anchor="end" textLength="76.7" lengthAdjust="spacingAndGlyphs" stroke="#000" stroke-width="0.45">0.0%</text>
<text x="1525.7" y="1367.8" font-family="'Liberation Sans', sans-serif" font-size="36" fill="#000" text-anchor="end" textLength="87.6" lengthAdjust="spacingAndGlyphs" stroke="#000" stroke-width="0.45">$0.00</text>
<text x="1525.7" y="1419.8" font-family="'Liberation Sans', sans-serif" font-size="36" fill="#000" text-anchor="end" textLength="87.6" lengthAdjust="spacingAndGlyphs" stroke="#000" stroke-width="0.45">$0.00</text>
<text x="1525.7" y="1523.8" font-family="'Liberation Sans', sans-serif" font-size="36" fill="#000" text-anchor="end" textLength="87.6" lengthAdjust="spacingAndGlyphs" stroke="#000" stroke-width="0.45">$0.00</text>
<text x="1525.7" y="1575.8" font-family="'Liberation Sans', sans-serif" font-size="36" fill="#000" text-anchor="end" textLength="87.6" lengthAdjust="spacingAndGlyphs" stroke="#000" stroke-width="0.45">$0.00</text>
<text x="1525.7" y="1627.8" font-family="'Liberation Sans', sans-serif" font-size="36" fill="#000" text-anchor="end" textLength="107.0" lengthAdjust="spacingAndGlyphs" stroke="#000" stroke-width="0.45">$60.00</text>
<text x="1525.7" y="1679.8" font-family="'Liberation Sans', sans-serif" font-size="36" fill="#000" text-anchor="end" textLength="107.0" lengthAdjust="spacingAndGlyphs" stroke="#000" stroke-width="0.45">$10.00</text>
<text x="957.7" y="1471.8" font-family="'Liberation Sans', sans-serif" font-size="36" fill="#000" text-anchor="end" textLength="118.7" lengthAdjust="spacingAndGlyphs" stroke="#000" stroke-width="0.45">-$69.09</text>
<text x="1099.7" y="1471.8" font-family="'Liberation Sans', sans-serif" font-size="36" fill="#000" text-anchor="end" textLength="118.7" lengthAdjust="spacingAndGlyphs" stroke="#000" stroke-width="0.45">-$69.17</text>
<text x="1241.7" y="1471.8" font-family="'Liberation Sans', sans-serif" font-size="36" fill="#000" text-anchor="end" textLength="118.7" lengthAdjust="spacingAndGlyphs" stroke="#000" stroke-width="0.45">-$69.25</text>
<text x="1383.7" y="1471.8" font-family="'Liberation Sans', sans-serif" font-size="36" fill="#000" text-anchor="end" textLength="118.7" lengthAdjust="spacingAndGlyphs" stroke="#000" stroke-width="0.45">-$69.32</text>
<text x="1525.7" y="1471.8" font-family="'Liberation Sans', sans-serif" font-size="36" fill="#000" text-anchor="end" textLength="118.7" lengthAdjust="spacingAndGlyphs" stroke="#000" stroke-width="0.45">-$69.38</text>
<text x="815.7" y="1835.8" font-family="'Liberation Sans', sans-serif" font-size="36" fill="#000" text-anchor="end" textLength="19.5" lengthAdjust="spacingAndGlyphs" stroke="#000" stroke-width="0.45">0</text>
<text x="815.7" y="2095.8" font-family="'Liberation Sans', sans-serif" font-size="36" fill="#000" text-anchor="end" textLength="87.6" lengthAdjust="spacingAndGlyphs" stroke="#000" stroke-width="0.45">$0.00</text>
<text x="815.7" y="2147.8" font-family="'Liberation Sans', sans-serif" font-size="36" fill="#000" text-anchor="end" textLength="87.6" lengthAdjust="spacingAndGlyphs" stroke="#000" stroke-width="0.45">$0.00</text>
<text x="815.7" y="2199.8" font-family="'Liberation Sans', sans-serif" font-size="36" fill="#000" text-anchor="end" textLength="87.6" lengthAdjust="spacingAndGlyphs" stroke="#000" stroke-width="0.45">$0.00</text>
<text x="815.7" y="2251.8" font-family="'Liberation Sans', sans-serif" font-size="36" fill="#000" text-anchor="end" textLength="155.7" lengthAdjust="spacingAndGlyphs" stroke="#000" stroke-width="0.45">$1,000.00</text>
<text x="815.7" y="2303.8" font-family="'Liberation Sans', sans-serif" font-size="36" fill="#000" text-anchor="end" textLength="167.3" lengthAdjust="spacingAndGlyphs" stroke="#000" stroke-width="0.45">-$1,000.00</text>
<text x="815.7" y="2355.8" font-family="'Liberation Sans', sans-serif" font-size="36" fill="#000" font-weight="700" text-anchor="end" textLength="118.7" lengthAdjust="spacingAndGlyphs" >-$10.00</text>
<path d="M1108.2 1328.2 L1128 1328.2 L1108.2 1347.8 Z" fill="#0b7a0b" />
<circle cx="873.8" cy="1144" r="11.7" fill="#5511f5" />
<circle cx="873.8" cy="1195.8" r="11.7" fill="#5511f5" />
<path d="M873.8 1153 L883.6 1167.4 H881.2 L883.6 1172.6 L873.8 1187 L864 1172.6 L866.4 1167.4 H864 Z" fill="#5511f5" />
<rect x="80" y="2358" width="2382" height="13.5" fill="rgba(0,0,0,0.22)" rx="6.75" />
</g>
<rect x="2522.4" y="502" width="13.3" height="1829" fill="rgba(0,0,0,0.215)" rx="6.65" />
<rect x="2541.8" y="424" width="2.3" height="2007" fill="#c2c2c2" />
<text x="2576.6" y="462" font-family="'Liberation Sans', sans-serif" font-size="30" fill="#222" textLength="172" lengthAdjust="spacingAndGlyphs" stroke="#222" stroke-width="0.5">o11 for Excel</text>
<circle cx="3794" cy="450.9" r="13.9" fill="#7a7a7a" />
<path d="M3788 444.9 L3800 456.9 M3800 444.9 L3788 456.9" fill="none" stroke="#fff" stroke-width="2.6" stroke-linecap="round"/>
<path d="M2590.1 521.1 L2592.1 511.9 L2587.9 511.4 L2587.7 520.8 Z" fill="#afa5b6" />
<path d="M2593.1 522.9 L2599.1 515.6 L2595.7 513.2 L2591.1 521.5 Z" fill="#d3a38c" />
<path d="M2594.9 525.8 L2603.7 522.2 L2601.7 518.5 L2593.8 523.7 Z" fill="#eba26f" />
<path d="M2595.2 529.3 L2604.6 530.2 L2604.6 526.0 L2595.2 526.9 Z" fill="#f3a266" />
<path d="M2593.8 532.5 L2601.7 537.7 L2603.7 533.9 L2594.9 530.4 Z" fill="#eda26e" />
<path d="M2591.1 534.7 L2595.7 542.9 L2599.2 540.6 L2593.1 533.3 Z" fill="#dea381" />
<path d="M2587.7 535.4 L2587.9 544.8 L2592.1 544.3 L2590.1 535.1 Z" fill="#cca59b" />
<path d="M2584.3 534.4 L2580.2 542.9 L2584.1 544.4 L2586.6 535.3 Z" fill="#b8a6b5" />
<path d="M2581.8 532.0 L2574.2 537.5 L2577.0 540.7 L2583.4 533.8 Z" fill="#b2a6bb" />
<path d="M2580.7 528.7 L2571.4 530.0 L2572.4 534.1 L2581.3 531.0 Z" fill="#a9a6c3" />
<path d="M2581.3 525.2 L2572.4 522.1 L2571.4 526.2 L2580.7 527.5 Z" fill="#9fa6cd" />
<path d="M2583.4 522.4 L2577.0 515.5 L2574.2 518.7 L2581.8 524.2 Z" fill="#96a6d5" />
<path d="M2586.6 520.9 L2584.1 511.8 L2580.1 513.3 L2584.3 521.8 Z" fill="#90a6db" />
<rect x="2624.3" y="512.2" width="1.6" height="31.6" fill="#dcdcdc" />
<clipPath id="wsclip"><rect x="2641.6" y="500" width="230" height="60"/></clipPath>
<text x="2621.5" y="536.3" font-family="'Liberation Sans', sans-serif" font-size="24.6" fill="#1c1c1c" textLength="235" lengthAdjust="spacingAndGlyphs" clip-path="url(#wsclip)" stroke="#1c1c1c" stroke-width="0.55">Personal Workspace</text>
<rect x="2898.3" y="512.2" width="1.6" height="31.6" fill="#dcdcdc" />
<rect x="2924.1" y="504.1" width="196" height="47.7" fill="#181818" rx="3.5" />
<path d="M2960.1 517 V540 M2948.4 528.5 H2971.8" fill="none" stroke="#fff" stroke-width="2" />
<text x="2989.2" y="536.3" font-family="'Liberation Sans', sans-serif" font-size="24.6" fill="#fff" font-weight="700" textLength="110.4" lengthAdjust="spacingAndGlyphs" >New Chat</text>
<rect x="3136" y="506" width="279.9" height="48.1" fill="#e4e4e4" rx="3.5" />
<text x="3152.7" y="538.4" font-family="'Liberation Sans', sans-serif" font-size="24.6" fill="#1c1c1c" textLength="200.3" lengthAdjust="spacingAndGlyphs" stroke="#1c1c1c" stroke-width="0.5">DCF Model Tem...</text>
<path d="M3374.6 518.8 L3393.8 537.4 M3393.8 518.8 L3374.6 537.4" fill="none" stroke="#555" stroke-width="1.7" />
<rect x="3775.9" y="490" width="52" height="51.4" fill="#757575" rx="9.5" opacity="0.96"/>
<text x="3803.5" y="528.4" font-family="'Liberation Serif', serif" font-size="38" fill="#fff" font-weight="700" font-style="italic" text-anchor="middle" >i</text>
<path d="M3782.5 517.6 H3774.2 V538.6 H3782.5" fill="none" stroke="#222" stroke-width="1.8" />
<path d="M3782 528.4 H3796 M3791 523.4 L3796.2 528.4 L3791 533.4" fill="none" stroke="#222" stroke-width="1.8" />
<clipPath id="chatclip"><rect x="2544" y="580" width="1296" height="1560"/></clipPath><g clip-path="url(#chatclip)">
<path d="M2617.2 606.0 L2630.6 619.4 Q2631.6 620.4 2630.6 621.4 L2618.2 632.2 Q2617.2 633.0 2616.2 632.2 L2604.0 620.6 Q2603.2 619.6 2604.0 618.6 Z" fill="none" stroke="#222" stroke-width="1.5" stroke-linejoin="round"/>
<line x1="2607.0" y1="608.2" x2="2617.2" y2="618.6" stroke="#222" stroke-width="1.5" />
<circle cx="2617.2" cy="619.0" r="2.3" fill="none" stroke="#222" stroke-width="1.4" />
<path d="M2631.2 625.6 C2629.6 628.6 2629.2 629.6 2629.2 630.6 a2 2 0 0 0 4 0 C2633.2 629.6 2632.7999999999997 628.6 2631.2 625.6 Z" fill="none" stroke="#222" stroke-width="1.3" />
<text x="2650.7" y="628.2" font-family="'Liberation Sans', sans-serif" font-size="24.6" fill="#1c1c1c" textLength="80.6" lengthAdjust="spacingAndGlyphs" stroke="#1c1c1c" stroke-width="0.95">Format</text>
<text x="3700" y="629.2" font-family="'Liberation Sans', sans-serif" font-size="20.2" fill="#5a5a5a" text-anchor="end" textLength="620" lengthAdjust="spacingAndGlyphs" stroke="#5a5a5a" stroke-width="0.45">Sheet1!B7:B8,B31:B36,C13:G13,C15:G15,C17:G24,G26,C28:G28</text>
<polyline points="3758.335,619.835 3765.6,626.9650000000001 3772.865,619.835" fill="none" stroke="#333" stroke-width="2.2" stroke-linecap="round" stroke-linejoin="round"/>
<path d="M2617.2 713.5 L2630.6 726.9 Q2631.6 727.9 2630.6 728.9 L2618.2 739.7 Q2617.2 740.5 2616.2 739.7 L2604.0 728.1 Q2603.2 727.1 2604.0 726.1 Z" fill="none" stroke="#222" stroke-width="1.5" stroke-linejoin="round"/>
<line x1="2607.0" y1="715.7" x2="2617.2" y2="726.1" stroke="#222" stroke-width="1.5" />
<circle cx="2617.2" cy="726.5" r="2.3" fill="none" stroke="#222" stroke-width="1.4" />
<path d="M2631.2 733.1 C2629.6 736.1 2629.2 737.1 2629.2 738.1 a2 2 0 0 0 4 0 C2633.2 737.1 2632.7999999999997 736.1 2631.2 733.1 Z" fill="none" stroke="#222" stroke-width="1.3" />
<text x="2650.7" y="735.7" font-family="'Liberation Sans', sans-serif" font-size="24.6" fill="#1c1c1c" textLength="80.6" lengthAdjust="spacingAndGlyphs" stroke="#1c1c1c" stroke-width="0.95">Format</text>
<text x="3700" y="736.7" font-family="'Liberation Sans', sans-serif" font-size="20.2" fill="#5a5a5a" text-anchor="end" textLength="158" lengthAdjust="spacingAndGlyphs" stroke="#5a5a5a" stroke-width="0.45">Sheet1!A36:B36</text>
<polyline points="3758.335,727.335 3765.6,734.4650000000001 3772.865,727.335" fill="none" stroke="#333" stroke-width="2.2" stroke-linecap="round" stroke-linejoin="round"/>
<line x1="2617.7" y1="824.8" x2="2617.7" y2="847.2" stroke="#222" stroke-width="1.6" />
<path d="M2612.6 836.0 H2603.8 M2607.6 832.2 L2603.6 836.0 L2607.6 839.8" fill="none" stroke="#222" stroke-width="1.4" stroke-linejoin="round" stroke-linecap="round"/>
<path d="M2622.8 836.0 H2631.6 M2627.8 832.2 L2631.8 836.0 L2627.8 839.8" fill="none" stroke="#222" stroke-width="1.4" stroke-linejoin="round" stroke-linecap="round"/>
<text x="2650.7" y="843.7" font-family="'Liberation Sans', sans-serif" font-size="24.6" fill="#1c1c1c" textLength="76.5" lengthAdjust="spacingAndGlyphs" stroke="#1c1c1c" stroke-width="0.95">Autofit</text>
<text x="3700" y="844.7" font-family="'Liberation Sans', sans-serif" font-size="20.2" fill="#5a5a5a" text-anchor="end" textLength="143" lengthAdjust="spacingAndGlyphs" stroke="#5a5a5a" stroke-width="0.45">Sheet1!A1:G36</text>
<polyline points="3758.335,835.335 3765.6,842.4650000000001 3772.865,835.335" fill="none" stroke="#333" stroke-width="2.2" stroke-linecap="round" stroke-linejoin="round"/>
</g>
<text x="2577.4" y="938" font-family="'Liberation Sans', sans-serif" font-size="31.6" fill="#151515" textLength="1078.4" lengthAdjust="spacingAndGlyphs" stroke="#151515" stroke-width="0.35">I have built a professional Discounted Cash Flow (DCF) template for you on</text>
<text x="3666.1" y="938" font-family="'Liberation Sans', sans-serif" font-size="31.6" fill="#151515" font-weight="700" textLength="99.9" lengthAdjust="spacingAndGlyphs" stroke="#151515" stroke-width="0.25">Sheet1</text>
<text x="3768.6" y="938" font-family="'Liberation Sans', sans-serif" font-size="31.6" fill="#151515" textLength="7.4" lengthAdjust="spacingAndGlyphs" stroke="#151515" stroke-width="0.35">.</text>
<text x="2577.2" y="1039.6" font-family="'Liberation Sans', sans-serif" font-size="39.3" fill="#151515" font-weight="700" textLength="360.9" lengthAdjust="spacingAndGlyphs" stroke="#151515" stroke-width="0.25">Template Structure:</text>
<text x="2577.2" y="1113.5" font-family="'Liberation Sans', sans-serif" font-size="31.6" fill="#151515" font-weight="700" textLength="216.0" lengthAdjust="spacingAndGlyphs" stroke="#151515" stroke-width="0.25">Assumptions (</text>
<rect x="2798.4" y="1085.3" width="219.5999999999999" height="38.4" fill="#e6f8ec" rx="4.5" stroke="#b0e8c2" stroke-width="1.7" />
<rect x="2822.8" y="1094.7" width="16.2" height="20" fill="#21a366" rx="1.6" />
<rect x="2822.8" y="1094.7" width="8.1" height="10" fill="#107c41" />
<rect x="2830.9" y="1094.7" width="8.1" height="10" fill="#33c481" />
<rect x="2822.8" y="1104.7" width="8.1" height="10" fill="#185c37" />
<rect x="2830.9" y="1104.7" width="8.1" height="10" fill="#107c41" />
<rect x="2817.4" y="1099.3" width="11.4" height="10.8" fill="#0e6a37" rx="1.2" />
<path d="M2820.8 1102.1000000000001 L2825.4 1107.5 M2825.4 1102.1000000000001 L2820.8 1107.5" fill="none" stroke="#fff" stroke-width="1.3" />
<text x="2853.1" y="1111.4" font-family="'Liberation Sans', sans-serif" font-size="23.6" fill="#15803d" textLength="74.1" lengthAdjust="spacingAndGlyphs" stroke="#15803d" stroke-width="0.4">Sheet1</text>
<text x="2941.9" y="1111.4" font-family="'Liberation Sans', sans-serif" font-size="19.4" fill="#72c08f" textLength="56.8" lengthAdjust="spacingAndGlyphs" >A3:B9</text>
<text x="3023.2" y="1113.5" font-family="'Liberation Sans', sans-serif" font-size="31.6" fill="#151515" font-weight="700" textLength="18.3" lengthAdjust="spacingAndGlyphs" stroke="#151515" stroke-width="0.25">):</text>
<text x="3052.4" y="1113.5" font-family="'Liberation Sans', sans-serif" font-size="31.6" fill="#151515" textLength="698.3" lengthAdjust="spacingAndGlyphs" stroke="#151515" stroke-width="0.35">Includes WACC, Terminal Growth Rate, Tax Rate,</text>
<text x="2576.6" y="1160.7" font-family="'Liberation Sans', sans-serif" font-size="31.6" fill="#151515" textLength="623.4" lengthAdjust="spacingAndGlyphs" stroke="#151515" stroke-width="0.35">and Capital Structure (Cash, Debt, Shares).</text>
<text x="2577.6" y="1226.3" font-family="'Liberation Sans', sans-serif" font-size="31.6" fill="#151515" font-weight="700" textLength="189.2" lengthAdjust="spacingAndGlyphs" stroke="#151515" stroke-width="0.25">Projections (</text>
<rect x="2772.3" y="1198.1" width="238.0" height="38.4" fill="#e6f8ec" rx="4.5" stroke="#b0e8c2" stroke-width="1.7" />
<rect x="2796.7000000000003" y="1207.5" width="16.2" height="20" fill="#21a366" rx="1.6" />
<rect x="2796.7000000000003" y="1207.5" width="8.1" height="10" fill="#107c41" />
<rect x="2804.8" y="1207.5" width="8.1" height="10" fill="#33c481" />
<rect x="2796.7000000000003" y="1217.5" width="8.1" height="10" fill="#185c37" />
<rect x="2804.8" y="1217.5" width="8.1" height="10" fill="#107c41" />
<rect x="2791.3" y="1212.1" width="11.4" height="10.8" fill="#0e6a37" rx="1.2" />
<path d="M2794.7000000000003 1214.9 L2799.3 1220.3 M2799.3 1214.9 L2794.7000000000003 1220.3" fill="none" stroke="#fff" stroke-width="1.3" />
<text x="2826" y="1224.2" font-family="'Liberation Sans', sans-serif" font-size="23.6" fill="#15803d" textLength="75.6" lengthAdjust="spacingAndGlyphs" stroke="#15803d" stroke-width="0.4">Sheet1</text>
<text x="2914.9" y="1224.2" font-family="'Liberation Sans', sans-serif" font-size="19.4" fill="#72c08f" textLength="76.5" lengthAdjust="spacingAndGlyphs" >A11:G24</text>
<text x="3015.3" y="1226.3" font-family="'Liberation Sans', sans-serif" font-size="31.6" fill="#151515" font-weight="700" textLength="18.2" lengthAdjust="spacingAndGlyphs" stroke="#151515" stroke-width="0.25">):</text>
<text x="3045.8" y="1226.3" font-family="'Liberation Sans', sans-serif" font-size="31.6" fill="#151515" textLength="656.6" lengthAdjust="spacingAndGlyphs" stroke="#151515" stroke-width="0.35">A 5-year forecast period calculating Revenue,</text>
<text x="2577.6" y="1273.7" font-family="'Liberation Sans', sans-serif" font-size="31.6" fill="#151515" textLength="764.8" lengthAdjust="spacingAndGlyphs" stroke="#151515" stroke-width="0.35">EBITDA, EBIT, and Unlevered Free Cash Flow (UFCF).</text>
<text x="2576.6" y="1339.2" font-family="'Liberation Sans', sans-serif" font-size="31.6" fill="#151515" font-weight="700" textLength="241.2" lengthAdjust="spacingAndGlyphs" stroke="#151515" stroke-width="0.25">Terminal Value (</text>
<rect x="2822.3" y="1311.0" width="244.0" height="38.4" fill="#e6f8ec" rx="4.5" stroke="#b0e8c2" stroke-width="1.7" />
<rect x="2846.7000000000003" y="1320.4" width="16.2" height="20" fill="#21a366" rx="1.6" />
<rect x="2846.7000000000003" y="1320.4" width="8.1" height="10" fill="#107c41" />
<rect x="2854.8" y="1320.4" width="8.1" height="10" fill="#33c481" />
<rect x="2846.7000000000003" y="1330.4" width="8.1" height="10" fill="#185c37" />
<rect x="2854.8" y="1330.4" width="8.1" height="10" fill="#107c41" />
<rect x="2841.3" y="1325.0" width="11.4" height="10.8" fill="#0e6a37" rx="1.2" />
<path d="M2844.7000000000003 1327.8000000000002 L2849.3 1333.2 M2849.3 1327.8000000000002 L2844.7000000000003 1333.2" fill="none" stroke="#fff" stroke-width="1.3" />
<text x="2876" y="1337.1000000000001" font-family="'Liberation Sans', sans-serif" font-size="23.6" fill="#15803d" textLength="75.5" lengthAdjust="spacingAndGlyphs" stroke="#15803d" stroke-width="0.4">Sheet1</text>
<text x="2965.3" y="1337.1000000000001" font-family="'Liberation Sans', sans-serif" font-size="19.4" fill="#72c08f" textLength="81.6" lengthAdjust="spacingAndGlyphs" >A26:B26</text>
<text x="3071.8" y="1339.2" font-family="'Liberation Sans', sans-serif" font-size="31.6" fill="#151515" font-weight="700" textLength="18.2" lengthAdjust="spacingAndGlyphs" stroke="#151515" stroke-width="0.25">):</text>
<text x="3102.3" y="1339.2" font-family="'Liberation Sans', sans-serif" font-size="31.6" fill="#151515" textLength="643.4" lengthAdjust="spacingAndGlyphs" stroke="#151515" stroke-width="0.35">Calculated using the Gordon Growth Method</text>
<text x="2577.6" y="1386" font-family="'Liberation Sans', sans-serif" font-size="31.6" fill="#151515" textLength="292.9" lengthAdjust="spacingAndGlyphs" stroke="#151515" stroke-width="0.35">(Perpetuity Growth).</text>
<text x="2576.6" y="1449.8" font-family="'Liberation Sans', sans-serif" font-size="31.6" fill="#151515" font-weight="700" textLength="313.9" lengthAdjust="spacingAndGlyphs" stroke="#151515" stroke-width="0.25">Valuation Summary (</text>
<rect x="2895.5" y="1421.6" width="244.0" height="38.4" fill="#e6f8ec" rx="4.5" stroke="#b0e8c2" stroke-width="1.7" />
<rect x="2919.9" y="1431.0" width="16.2" height="20" fill="#21a366" rx="1.6" />
<rect x="2919.9" y="1431.0" width="8.1" height="10" fill="#107c41" />
<rect x="2928.0" y="1431.0" width="8.1" height="10" fill="#33c481" />
<rect x="2919.9" y="1441.0" width="8.1" height="10" fill="#185c37" />
<rect x="2928.0" y="1441.0" width="8.1" height="10" fill="#107c41" />
<rect x="2914.5" y="1435.6" width="11.4" height="10.8" fill="#0e6a37" rx="1.2" />
<path d="M2917.9 1438.4 L2922.5 1443.8 M2922.5 1438.4 L2917.9 1443.8" fill="none" stroke="#fff" stroke-width="1.3" />
<text x="2948.7" y="1447.7" font-family="'Liberation Sans', sans-serif" font-size="23.6" fill="#15803d" textLength="76.0" lengthAdjust="spacingAndGlyphs" stroke="#15803d" stroke-width="0.4">Sheet1</text>
<text x="3038.6" y="1447.7" font-family="'Liberation Sans', sans-serif" font-size="19.4" fill="#72c08f" textLength="82.0" lengthAdjust="spacingAndGlyphs" >A30:B36</text>
<text x="3145" y="1449.8" font-family="'Liberation Sans', sans-serif" font-size="31.6" fill="#151515" font-weight="700" textLength="18.3" lengthAdjust="spacingAndGlyphs" stroke="#151515" stroke-width="0.25">):</text>
<text x="3175.5" y="1449.8" font-family="'Liberation Sans', sans-serif" font-size="31.6" fill="#151515" textLength="625.5" lengthAdjust="spacingAndGlyphs" stroke="#151515" stroke-width="0.35">Summarizes the Present Value (PV) of cash</text>
<text x="2576.6" y="1497.5" font-family="'Liberation Sans', sans-serif" font-size="31.6" fill="#151515" textLength="567.4" lengthAdjust="spacingAndGlyphs" stroke="#151515" stroke-width="0.35">flows and terminal value to arrive at the</text>
<text x="3152.2" y="1497.5" font-family="'Liberation Sans', sans-serif" font-size="31.6" fill="#151515" font-weight="700" textLength="246.8" lengthAdjust="spacingAndGlyphs" stroke="#151515" stroke-width="0.25">Enterprise Value</text>
<text x="3399.6" y="1497.5" font-family="'Liberation Sans', sans-serif" font-size="31.6" fill="#151515" textLength="6.4" lengthAdjust="spacingAndGlyphs" stroke="#151515" stroke-width="0.35">,</text>
<text x="3418.5" y="1497.5" font-family="'Liberation Sans', sans-serif" font-size="31.6" fill="#151515" font-weight="700" textLength="185.7" lengthAdjust="spacingAndGlyphs" stroke="#151515" stroke-width="0.25">Equity Value</text>
<text x="3604.8" y="1497.5" font-family="'Liberation Sans', sans-serif" font-size="31.6" fill="#151515" textLength="71.5" lengthAdjust="spacingAndGlyphs" stroke="#151515" stroke-width="0.35">, and</text>
<text x="3685.8" y="1497.5" font-family="'Liberation Sans', sans-serif" font-size="31.6" fill="#151515" font-weight="700" textLength="109.8" lengthAdjust="spacingAndGlyphs" stroke="#151515" stroke-width="0.25">Implied</text>
<text x="2576.6" y="1545.8" font-family="'Liberation Sans', sans-serif" font-size="31.6" fill="#151515" font-weight="700" textLength="172.4" lengthAdjust="spacingAndGlyphs" stroke="#151515" stroke-width="0.25">Share Price</text>
<text x="2750" y="1545.8" font-family="'Liberation Sans', sans-serif" font-size="31.6" fill="#151515" textLength="7" lengthAdjust="spacingAndGlyphs" stroke="#151515" stroke-width="0.35">.</text>
<text x="2577.6" y="1655.6" font-family="'Liberation Sans', sans-serif" font-size="39.3" fill="#151515" font-weight="700" textLength="361.1" lengthAdjust="spacingAndGlyphs" stroke="#151515" stroke-width="0.25">Key Formulas Used:</text>
<text x="2577.6" y="1729.8" font-family="'Liberation Sans', sans-serif" font-size="31.6" fill="#151515" font-weight="700" textLength="76.9" lengthAdjust="spacingAndGlyphs" stroke="#151515" stroke-width="0.25">UFCF</text>
<text x="2656" y="1729.8" font-family="'Liberation Sans', sans-serif" font-size="31.6" fill="#151515" font-weight="700" textLength="9.3" lengthAdjust="spacingAndGlyphs" stroke="#151515" stroke-width="0.25">:</text>
<rect x="2676.4" y="1698.3" width="413.1999999999998" height="41.8" fill="#f1f1f1" rx="6.5" />
<text x="2688" y="1730.2" font-family="'Liberation Sans', sans-serif" font-size="27.8" fill="#151515" textLength="388.3" lengthAdjust="spacingAndGlyphs" stroke="#151515" stroke-width="0.25">EBIAT + D&amp;A - CapEx - ΔNWC</text>
<rect x="3102.3" y="1702.7" width="246.29999999999973" height="38.4" fill="#e6f8ec" rx="4.5" stroke="#b0e8c2" stroke-width="1.7" />
<rect x="3126.7000000000003" y="1712.1000000000001" width="16.2" height="20" fill="#21a366" rx="1.6" />
<rect x="3126.7000000000003" y="1712.1000000000001" width="8.1" height="10" fill="#107c41" />
<rect x="3134.8" y="1712.1000000000001" width="8.1" height="10" fill="#33c481" />
<rect x="3126.7000000000003" y="1722.1000000000001" width="8.1" height="10" fill="#185c37" />
<rect x="3134.8" y="1722.1000000000001" width="8.1" height="10" fill="#107c41" />
<rect x="3121.3" y="1716.7" width="11.4" height="10.8" fill="#0e6a37" rx="1.2" />
<path d="M3124.7000000000003 1719.5000000000002 L3129.3 1724.9 M3129.3 1719.5000000000002 L3124.7000000000003 1724.9" fill="none" stroke="#fff" stroke-width="1.3" />
<text x="3156" y="1728.8000000000002" font-family="'Liberation Sans', sans-serif" font-size="23.6" fill="#15803d" textLength="75.6" lengthAdjust="spacingAndGlyphs" stroke="#15803d" stroke-width="0.4">Sheet1</text>
<text x="3245.4" y="1728.8000000000002" font-family="'Liberation Sans', sans-serif" font-size="19.4" fill="#72c08f" textLength="84.3" lengthAdjust="spacingAndGlyphs" >C24:G24</text>
<text x="2576.6" y="1794.2" font-family="'Liberation Sans', sans-serif" font-size="31.6" fill="#151515" font-weight="700" textLength="218.4" lengthAdjust="spacingAndGlyphs" stroke="#151515" stroke-width="0.25">Terminal Value</text>
<text x="2796.6" y="1794.2" font-family="'Liberation Sans', sans-serif" font-size="31.6" fill="#151515" font-weight="700" textLength="9.0" lengthAdjust="spacingAndGlyphs" stroke="#151515" stroke-width="0.25">:</text>
<rect x="2815" y="1762.0" width="466.5" height="41.8" fill="#f1f1f1" rx="6.5" />
<text x="2826.7" y="1793.9" font-family="'Liberation Sans', sans-serif" font-size="27.8" fill="#151515" textLength="442.0" lengthAdjust="spacingAndGlyphs" stroke="#151515" stroke-width="0.25">Year 5 UFCF * (1 + g) / (WACC - g)</text>
<rect x="3294.2" y="1766.3999999999999" width="198.0" height="38.4" fill="#e6f8ec" rx="4.5" stroke="#b0e8c2" stroke-width="1.7" />
<rect x="3318.6" y="1775.8" width="16.2" height="20" fill="#21a366" rx="1.6" />
<rect x="3318.6" y="1775.8" width="8.1" height="10" fill="#107c41" />
<rect x="3326.7" y="1775.8" width="8.1" height="10" fill="#33c481" />
<rect x="3318.6" y="1785.8" width="8.1" height="10" fill="#185c37" />
<rect x="3326.7" y="1785.8" width="8.1" height="10" fill="#107c41" />
<rect x="3313.2" y="1780.3999999999999" width="11.4" height="10.8" fill="#0e6a37" rx="1.2" />
<path d="M3316.6 1783.2 L3321.2 1788.6 M3321.2 1783.2 L3316.6 1788.6" fill="none" stroke="#fff" stroke-width="1.3" />
<text x="3348" y="1792.5" font-family="'Liberation Sans', sans-serif" font-size="23.6" fill="#15803d" textLength="76" lengthAdjust="spacingAndGlyphs" stroke="#15803d" stroke-width="0.4">Sheet1</text>
<text x="3436.8" y="1792.5" font-family="'Liberation Sans', sans-serif" font-size="19.4" fill="#72c08f" textLength="37.2" lengthAdjust="spacingAndGlyphs" >B26</text>
<text x="2577.6" y="1858.2" font-family="'Liberation Sans', sans-serif" font-size="31.6" fill="#151515" font-weight="700" textLength="244.4" lengthAdjust="spacingAndGlyphs" stroke="#151515" stroke-width="0.25">Enterprise Value</text>
<text x="2823.2" y="1858.2" font-family="'Liberation Sans', sans-serif" font-size="31.6" fill="#151515" font-weight="700" textLength="9.0" lengthAdjust="spacingAndGlyphs" stroke="#151515" stroke-width="0.25">:</text>
<rect x="2842.2" y="1826.0" width="647.2000000000003" height="41.8" fill="#f1f1f1" rx="6.5" />
<text x="2853.9" y="1857.9" font-family="'Liberation Sans', sans-serif" font-size="27.8" fill="#151515" textLength="623.9" lengthAdjust="spacingAndGlyphs" stroke="#151515" stroke-width="0.25">PV of Stage 1 Cash Flows + PV of Terminal Value</text>
<rect x="3503.3" y="1830.3999999999999" width="198.0" height="38.4" fill="#e6f8ec" rx="4.5" stroke="#b0e8c2" stroke-width="1.7" />
<rect x="3527.7000000000003" y="1839.8" width="16.2" height="20" fill="#21a366" rx="1.6" />
<rect x="3527.7000000000003" y="1839.8" width="8.1" height="10" fill="#107c41" />
<rect x="3535.8" y="1839.8" width="8.1" height="10" fill="#33c481" />
<rect x="3527.7000000000003" y="1849.8" width="8.1" height="10" fill="#185c37" />
<rect x="3535.8" y="1849.8" width="8.1" height="10" fill="#107c41" />
<rect x="3522.3" y="1844.3999999999999" width="11.4" height="10.8" fill="#0e6a37" rx="1.2" />
<path d="M3525.7000000000003 1847.2 L3530.3 1852.6 M3530.3 1847.2 L3525.7000000000003 1852.6" fill="none" stroke="#fff" stroke-width="1.3" />
<text x="3557.1" y="1856.5" font-family="'Liberation Sans', sans-serif" font-size="23.6" fill="#15803d" textLength="74.9" lengthAdjust="spacingAndGlyphs" stroke="#15803d" stroke-width="0.4">Sheet1</text>
<text x="3645.8" y="1856.5" font-family="'Liberation Sans', sans-serif" font-size="19.4" fill="#72c08f" textLength="37.2" lengthAdjust="spacingAndGlyphs" >B33</text>
<text x="2577.6" y="1922" font-family="'Liberation Sans', sans-serif" font-size="31.6" fill="#151515" font-weight="700" textLength="289.8" lengthAdjust="spacingAndGlyphs" stroke="#151515" stroke-width="0.25">Implied Share Price</text>
<text x="2868.7" y="1922" font-family="'Liberation Sans', sans-serif" font-size="31.6" fill="#151515" font-weight="700" textLength="9.0" lengthAdjust="spacingAndGlyphs" stroke="#151515" stroke-width="0.25">:</text>
<rect x="2887.1" y="1889.8" width="676.7000000000003" height="41.8" fill="#f1f1f1" rx="6.5" />
<text x="2899.9" y="1921.7" font-family="'Liberation Sans', sans-serif" font-size="27.8" fill="#151515" textLength="651.7" lengthAdjust="spacingAndGlyphs" stroke="#151515" stroke-width="0.25">(Enterprise Value - Net Debt) / Shares Outstanding</text>
<rect x="3577" y="1894.2" width="199.19999999999982" height="38.4" fill="#e6f8ec" rx="4.5" stroke="#b0e8c2" stroke-width="1.7" />
<rect x="3601.4" y="1903.6000000000001" width="16.2" height="20" fill="#21a366" rx="1.6" />
<rect x="3601.4" y="1903.6000000000001" width="8.1" height="10" fill="#107c41" />
<rect x="3609.5" y="1903.6000000000001" width="8.1" height="10" fill="#33c481" />
<rect x="3601.4" y="1913.6000000000001" width="8.1" height="10" fill="#185c37" />
<rect x="3609.5" y="1913.6000000000001" width="8.1" height="10" fill="#107c41" />
<rect x="3596" y="1908.2" width="11.4" height="10.8" fill="#0e6a37" rx="1.2" />
<path d="M3599.4 1911.0000000000002 L3604 1916.4 M3604 1911.0000000000002 L3599.4 1916.4" fill="none" stroke="#fff" stroke-width="1.3" />
<text x="3630.9" y="1920.3000000000002" font-family="'Liberation Sans', sans-serif" font-size="23.6" fill="#15803d" textLength="75.9" lengthAdjust="spacingAndGlyphs" stroke="#15803d" stroke-width="0.4">Sheet1</text>
<text x="3719.6" y="1920.3000000000002" font-family="'Liberation Sans', sans-serif" font-size="19.4" fill="#72c08f" textLength="38.3" lengthAdjust="spacingAndGlyphs" >B36</text>
<text x="3781.7" y="1924" font-family="'Liberation Sans', sans-serif" font-size="31.6" fill="#151515" textLength="12.3" lengthAdjust="spacingAndGlyphs" stroke="#151515" stroke-width="0.35">*</text>
<text x="2576.6" y="2009.6" font-family="'Liberation Sans', sans-serif" font-size="31.6" fill="#151515" textLength="1203.4" lengthAdjust="spacingAndGlyphs" stroke="#151515" stroke-width="0.35">You can now update the blue-shaded assumption cells and historical data to reflect</text>
<text x="2576.6" y="2057.9" font-family="'Liberation Sans', sans-serif" font-size="31.6" fill="#151515" textLength="542.4" lengthAdjust="spacingAndGlyphs" stroke="#151515" stroke-width="0.35">the specific company you are valuing.</text>
<text x="2603.2" y="2228" font-family="'Liberation Sans', sans-serif" font-size="31.6" fill="#6e6e6e" textLength="891.2" lengthAdjust="spacingAndGlyphs" stroke="#6e6e6e" stroke-width="0.4">Ask about financial analysis, market trends, risk assessment...</text>
<circle cx="2626" cy="2347.8" r="13.4" fill="none" stroke="#d4d4d4" stroke-width="2.4" />
<path d="M2625.6 2334.4 a13.4 13.4 0 0 1 2.6 0.2" fill="none" stroke="#666" stroke-width="2.4" />
<rect x="2665.9" y="2324" width="63.7" height="47.2" fill="#e4e4e4" rx="3.5" />
<path d="M2691.4 2340 V2337.4 a2 2 0 0 1 2 -2 H2702.6 L2708.6 2341.4 V2353.6 a2 2 0 0 1 -2 2 H2704.6" fill="none" stroke="#111" stroke-width="1.9" stroke-linejoin="round"/>
<path d="M2689.4 2340.2 H2698.6 L2704.4 2346 V2358 a2 2 0 0 1 -2 2 H2689.4 a2 2 0 0 1 -2 -2 V2342.2 a2 2 0 0 1 2 -2 Z" fill="none" stroke="#111" stroke-width="1.9" stroke-linejoin="round"/>
<line x1="2691.6" y1="2350.4" x2="2699.6" y2="2350.4" stroke="#111" stroke-width="1.7" />
<line x1="2691.6" y1="2355" x2="2699.6" y2="2355" stroke="#111" stroke-width="1.7" />
<rect x="2745.7" y="2324" width="237.9" height="47.2" fill="#e4e4e4" rx="3.5" />
<text x="2762.7" y="2355.4" font-family="'Liberation Sans', sans-serif" font-size="24.2" fill="#1c1c1c" textLength="169.1" lengthAdjust="spacingAndGlyphs" stroke="#1c1c1c" stroke-width="0.5">Gemini 3 Flash</text>
<path d="M2948 2342.4 L2954 2336.6 L2960 2342.4 M2948 2353 L2954 2358.8 L2960 2353" fill="none" stroke="#333" stroke-width="1.9" stroke-linejoin="round" stroke-linecap="round"/>
<circle cx="3675.9" cy="2347.9" r="22.6" fill="#fff" stroke="#dcdcdc" stroke-width="2" />
<path d="M3675.9 2336.2 V2359.8 M3664.1 2348 H3687.7" fill="none" stroke="#555" stroke-width="2.3" />
<rect x="3716" y="2332" width="1.8" height="31.7" fill="#dedede" />
<defs><linearGradient id="sendg" x1="0.15" y1="0.1" x2="0.85" y2="0.9"><stop offset="0" stop-color="#c6d2f6"/><stop offset="0.5" stop-color="#dedcde"/><stop offset="1" stop-color="#f6dcbc"/></linearGradient></defs>
<circle cx="3758" cy="2347.9" r="24" fill="url(#sendg)" />
<path d="M3758 2358.4 V2338.4 M3747.6 2348.4 L3758 2338 L3768.4 2348.4" fill="none" stroke="#808080" stroke-width="2.5" stroke-linejoin="round" stroke-linecap="round"/>
<rect x="0" y="2378" width="2542" height="53" fill="#ececec" />
<rect x="0" y="2377.2" width="2542" height="1.6" fill="#c6c6c6" />
<defs><filter id="tabsh" x="-10%" y="-10%" width="120%" height="140%"><feDropShadow dx="0" dy="1" stdDeviation="1.6" flood-color="#000" flood-opacity="0.35"/></filter><clipPath id="tabclip"><rect x="100" y="2378" width="220" height="60"/></clipPath></defs>
<g clip-path="url(#tabclip)">
<path d="M121 2370 H279 V2416.4 a6 6 0 0 1 -6 6 H127 a6 6 0 0 1 -6 -6 Z" fill="#fff" filter="url(#tabsh)"/>
</g>
<text x="160.7" y="2411.8" font-family="'Liberation Sans', sans-serif" font-size="24.4" fill="#1e7b45" font-weight="700" textLength="76.8" lengthAdjust="spacingAndGlyphs" >Sheet1</text>
<path d="M44.6 2396 V2414.9 L29.5 2405.4 Z" fill="#b9b9b9" />
<path d="M75.6 2396 V2414.9 L90.8 2405.4 Z" fill="#b9b9b9" />
<path d="M318.2 2393.8 V2412.6 M308.4 2403.2 H328" fill="none" stroke="#444" stroke-width="3" />
<rect x="353.9" y="2380" width="1.6" height="40.4" fill="#c8c8c8" />
<rect x="0" y="2431" width="3840" height="55" fill="#f3f3f3" />
<rect x="0" y="2430" width="3840" height="1.6" fill="#bdbdbd" />
<text x="49.2" y="2466.7" font-family="'Liberation Sans', sans-serif" font-size="23.2" fill="#5c5c5c" textLength="68" lengthAdjust="spacingAndGlyphs" >Ready</text>
<text x="161.5" y="2466.7" font-family="'Liberation Sans', sans-serif" font-size="23.2" fill="#5c5c5c" textLength="276.4" lengthAdjust="spacingAndGlyphs" >Circular References: C13</text>
<text x="525.6" y="2466.7" font-family="'Liberation Sans', sans-serif" font-size="23.2" fill="#5c5c5c" textLength="278" lengthAdjust="spacingAndGlyphs" >Accessibility: Good to go</text>
<circle cx="497.6" cy="2447.4" r="3.6" fill="none" stroke="#444" stroke-width="1.8" />
<path d="M483.4 2451.4 C488 2455.4 493 2456 497.6 2456 C502.2 2456 507 2455.2 511.6 2450.4" fill="none" stroke="#444" stroke-width="1.9" stroke-linecap="round"/>
<path d="M492.4 2456 C493.4 2462 492 2468 487.6 2472.6 C486 2474.2 488 2475.6 489.6 2474.4 C493.4 2471 495.6 2466 497.2 2461.4" fill="none" stroke="#444" stroke-width="1.9" stroke-linecap="round" stroke-linejoin="round"/>
<path d="M502.6 2456 C502.4 2458 502.4 2459.6 502.6 2461" fill="none" stroke="#444" stroke-width="1.9" stroke-linecap="round"/>
<circle cx="504.6" cy="2468.6" r="7.4" fill="#444" />
<path d="M501 2468.8 L503.6 2471.4 L508.4 2465.8" fill="none" stroke="#f3f3f3" stroke-width="1.8" stroke-linecap="round" stroke-linejoin="round"/>
<rect x="3207.7" y="2436.1" width="62.1" height="43.5" fill="#b6b6b6" rx="4.5" />
<rect x="3223.8" y="2443.6" width="28.9" height="29.1" fill="#3a3a3a" rx="5" />
<rect x="3232.63" y="2443.6" width="1.6" height="29.1" fill="#b6b6b6" />
<rect x="3223.8" y="2452.4999999999995" width="28.9" height="1.6" fill="#b6b6b6" />
<rect x="3242.26" y="2443.6" width="1.6" height="29.1" fill="#b6b6b6" />
<rect x="3223.8" y="2462.2" width="28.9" height="1.6" fill="#b6b6b6" />
<path d="M3303.4 2443 H3315.6 L3323.4 2450.8 V2470.6 a2.6 2.6 0 0 1 -2.6 2.6 H3303.4 a2.6 2.6 0 0 1 -2.6 -2.6 V2445.6 a2.6 2.6 0 0 1 2.6 -2.6 Z" fill="none" stroke="#444" stroke-width="1.9" stroke-linejoin="round"/>
<path d="M3315.4 2443.2 V2451 H3323.2" fill="none" stroke="#444" stroke-width="1.9" />
<rect x="3305" y="2457" width="14" height="11" fill="none" rx="2" stroke="#444" stroke-width="1.8" />
<line x1="3305" y1="2461.4" x2="3319" y2="2461.4" stroke="#444" stroke-width="1.6" />
<line x1="3310" y1="2461.4" x2="3310" y2="2468" stroke="#444" stroke-width="1.6" />
<path d="M3372.6 2442.4 V2450.8 H3395.8 V2442.4 M3372.6 2474 V2465.4 H3395.8 V2474" fill="none" stroke="#444" stroke-width="1.9" />
<line x1="3369.4" y1="2458" x2="3399.2" y2="2458" stroke="#444" stroke-width="1.8" stroke-dasharray="4.4 2.4"/>
<line x1="3433.7" y1="2458.4" x2="3450.4" y2="2458.4" stroke="#555" stroke-width="1.8" />
<rect x="3464.2" y="2454.7" width="199.7" height="8.3" fill="#a9a9a9" rx="4.15" />
<defs><filter id="knsh" x="-30%" y="-30%" width="160%" height="180%"><feDropShadow dx="0" dy="1" stdDeviation="1.5" flood-color="#000" flood-opacity="0.28"/></filter></defs>
<rect x="3561.3" y="2444.4" width="36" height="27.7" fill="#fff" rx="13.8" filter="url(#knsh)"/>
<path d="M3686.1 2450.6 V2466.2 M3678.3 2458.4 H3693.9" fill="none" stroke="#555" stroke-width="1.8" />
<text x="3728.5" y="2467.1" font-family="'Liberation Sans', sans-serif" font-size="24" fill="#5c5c5c" textLength="61.6" lengthAdjust="spacingAndGlyphs" >162%</text>
</svg>
</body></html>
